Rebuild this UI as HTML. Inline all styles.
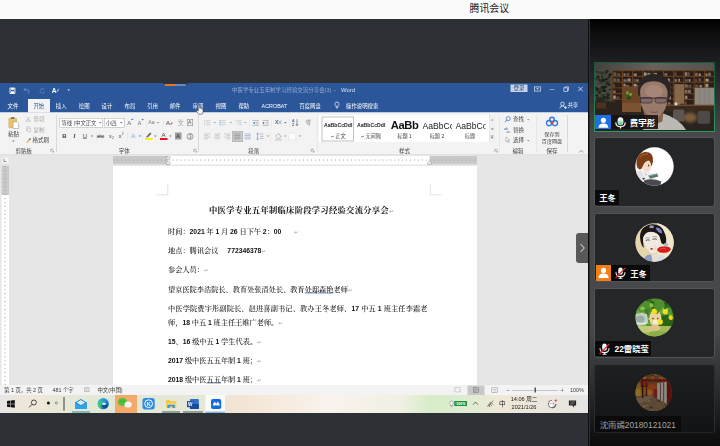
<!DOCTYPE html>
<html lang="zh-CN"><head><meta charset="utf-8"><title>腾讯会议</title>
<style>
html,body{margin:0;padding:0}
body{width:720px;height:446px;overflow:hidden;background:#2d3136;position:relative;font-family:"Liberation Sans","Noto Sans CJK SC",sans-serif;}
#top{position:absolute;left:0;top:0;width:720px;height:19px;background:#fbfbfb;}
#top span{position:absolute;left:469.5px;top:1.5px;font-size:10px;line-height:13px;color:#222;white-space:nowrap;letter-spacing:-0.1px}
#word{position:absolute;left:0;top:0;width:1440px;height:892px;transform:scale(0.5);transform-origin:0 0;pointer-events:none}
#word div,#word span,#word svg{position:absolute;box-sizing:border-box}
#word span{white-space:nowrap}
#word svg{overflow:visible}
#word u{text-decoration:underline;text-decoration-color:#7d94d0;text-decoration-thickness:1.6px;text-underline-offset:2.4px}
#panel{position:absolute;left:590.4px;top:19px;width:129.6px;height:427px;background:linear-gradient(180deg,#000 0%,#0e0e0f 3.5%,#1d1e20 10%,#47484b 27%,#47484b 73%,#2c2d2f 86%,#0b0b0c 100%);}
#panel div,#panel span,#panel svg{position:absolute;box-sizing:border-box}
#panel span{white-space:nowrap;color:#fff;font-weight:700}
.tile{left:3.9px;width:121px;height:69.3px;background:#252628;border:1.3px solid #525357;border-radius:3px;overflow:hidden}
.lbl{background:#0a0a0a;height:15.3px}
.lbl span{font-size:8.35px;line-height:15.3px;top:1.5px}

</style></head>
<body>
<div id="top"><span>腾讯会议</span></div>
<div id="word">
<div style="left:0px;top:166px;width:1176px;height:660px;background:#f3f3f3;"></div>
<div style="left:0px;top:166px;width:1176px;height:59px;background:#2b579a;"></div>
<div style="left:0px;top:225px;width:1176px;height:84px;background:#f3f3f3;"></div>
<div style="left:0px;top:309px;width:1176px;height:2px;background:#d4d4d4;"></div>
<div style="left:0px;top:311px;width:1176px;height:459px;background:#e6e6e6;"></div>
<div style="left:226px;top:331.2px;width:728px;height:438.8px;background:#ffffff;"></div>
<div style="left:0px;top:770px;width:1176px;height:20px;background:#f3f3f3;"></div>
<div style="left:0px;top:790px;width:1176px;height:36px;background:linear-gradient(90deg,#e9e9e6 0%,#f1efe2 30%,#f3f1dd 55%,#e4ecd6 80%,#dfe6da 100%);"></div>
<svg style="left:18.6px;top:174.6px;width:11.8px;height:13px;" viewBox="0 0 5.9 6.5"><path d="M0.5 0.5H5.4V6H0.5Z" fill="none" stroke="#fff" stroke-width=".9"/><rect x="1.6" y="0.6" width="2.7" height="1.8" fill="#fff"/><rect x="1.5" y="3.7" width="2.9" height="2.3" fill="#fff"/></svg>
<svg style="left:46px;top:175.2px;width:14px;height:12px;" viewBox="0 0 7 6"><path d="M1 2.2H4.2Q6.2 2.2 6.2 4.2Q6.2 5.6 4.6 5.6M2.8 0.4L1 2.2L2.8 4" fill="none" stroke="#7391c4" stroke-width=".9"/></svg>
<svg style="left:78px;top:174.8px;width:14px;height:14px;" viewBox="0 0 7 7"><path d="M5.6 3.5A2.3 2.3 0 1 1 4.2 1.4" fill="none" stroke="#5d7db6" stroke-width=".8"/><path d="M3.4 0.2L5 1.4L3.6 2.8" fill="none" stroke="#5d7db6" stroke-width=".7"/></svg>
<span style="top:171.56px;font-size:13.2px;line-height:18.48px;color:#fff;font-weight:700;left:103.6px;">A</span>
<svg style="left:111.2px;top:175.2px;width:8.8px;height:12px;" viewBox="0 0 4.4 6"><path d="M0.4 5.6Q1.6 1.6 4 0.4Q3.4 3.4 0.4 5.6" fill="#fff" stroke="#2b579a" stroke-width=".4"/></svg>
<svg style="left:135.2px;top:179.2px;width:4.8px;height:3.6px;" viewBox="0 0 2.4 1.8"><path d="M0 0H2.4L1.2 1.6Z" fill="#fff"/></svg>
<div style="left:326.8px;top:166px;width:48px;height:2.6px;background:#243454;"></div>
<div style="left:329.4px;top:168.4px;width:21px;height:4px;background:#e0782c;border-radius:2px 0 0 2px"></div>
<div style="left:350.4px;top:168.4px;width:22px;height:4px;background:#6e86b4;border-radius:0 2px 2px 0"></div>
<span style="top:172.77px;font-size:10.9px;line-height:15.26px;color:#94a7ca;left:464px;">中医学专业五年制学习经验交流分享会(3)</span>
<span style="top:172.42px;font-size:11.4px;line-height:15.96px;color:#a9b9d6;left:668px;">-</span>
<span style="top:172.14px;font-size:11.8px;line-height:16.52px;color:#d9e1f0;left:682px;">Word</span>
<div style="left:1021px;top:169.2px;width:34px;height:14.8px;background:#c7d3e8;"></div>
<span style="top:169.24px;font-size:10.8px;line-height:15.12px;color:#1e3f74;left:1038px;transform:translateX(-50%);">登录</span>
<svg style="left:1068px;top:173.2px;width:14px;height:10px;" viewBox="0 0 7 5"><rect x=".4" y=".4" width="6.2" height="4.2" fill="none" stroke="#dfe6f3" stroke-width=".7"/><path d="M3.5 1.4V3.8M2.4 2.6L3.5 1.4L4.6 2.6" stroke="#dfe6f3" stroke-width=".6" fill="none"/></svg>
<div style="left:1098.8px;top:178px;width:10px;height:1.2px;background:#dfe6f3;"></div>
<svg style="left:1127.2px;top:172.8px;width:10.8px;height:10.8px;" viewBox="0 0 5.4 5.4"><rect x=".4" y="1.4" width="3.6" height="3.6" fill="none" stroke="#dfe6f3" stroke-width=".7"/><path d="M1.4 1.4V.4H5V4H4" fill="none" stroke="#dfe6f3" stroke-width=".7"/></svg>
<svg style="left:1156px;top:172.8px;width:10px;height:10px;" viewBox="0 0 5 5"><path d="M.3 .3L4.7 4.7M4.7 .3L.3 4.7" stroke="#e8edf6" stroke-width=".8"/></svg>
<div style="left:56px;top:197.6px;width:44px;height:27.6px;background:#f3f3f3;"></div>
<span style="top:204.24px;font-size:10.8px;line-height:15.12px;color:#ffffff;left:26px;transform:translateX(-50%);">文件</span>
<span style="top:204.24px;font-size:10.8px;line-height:15.12px;color:#2b579a;left:77.6px;transform:translateX(-50%);">开始</span>
<span style="top:204.24px;font-size:10.8px;line-height:15.12px;color:#ffffff;left:122.4px;transform:translateX(-50%);">插入</span>
<span style="top:204.24px;font-size:10.8px;line-height:15.12px;color:#ffffff;left:168.4px;transform:translateX(-50%);">绘图</span>
<span style="top:204.24px;font-size:10.8px;line-height:15.12px;color:#ffffff;left:214px;transform:translateX(-50%);">设计</span>
<span style="top:204.24px;font-size:10.8px;line-height:15.12px;color:#ffffff;left:260px;transform:translateX(-50%);">布局</span>
<span style="top:204.24px;font-size:10.8px;line-height:15.12px;color:#ffffff;left:305.2px;transform:translateX(-50%);">引用</span>
<span style="top:204.24px;font-size:10.8px;line-height:15.12px;color:#ffffff;left:350px;transform:translateX(-50%);">邮件</span>
<span style="top:204.24px;font-size:10.8px;line-height:15.12px;color:#ffffff;left:396px;transform:translateX(-50%);">审阅</span>
<span style="top:204.24px;font-size:10.8px;line-height:15.12px;color:#ffffff;left:442px;transform:translateX(-50%);">视图</span>
<span style="top:204.24px;font-size:10.8px;line-height:15.12px;color:#ffffff;left:487.6px;transform:translateX(-50%);">帮助</span>
<span style="top:204.24px;font-size:10.8px;line-height:15.12px;color:#ffffff;left:548.8px;transform:translateX(-50%);">ACROBAT</span>
<span style="top:204.24px;font-size:10.8px;line-height:15.12px;color:#ffffff;left:620px;transform:translateX(-50%);">百度网盘</span>
<svg style="left:668.8px;top:203.2px;width:10px;height:16px;" viewBox="0 0 5 8"><path d="M2.5 .5A2 2 0 0 1 3.6 4.2V5.4H1.4V4.2A2 2 0 0 1 2.5 .5Z" fill="none" stroke="#fff" stroke-width=".7"/><path d="M1.5 6.4H3.5" stroke="#fff" stroke-width=".7"/></svg>
<span style="top:204.24px;font-size:10.8px;line-height:15.12px;color:#fff;left:692px;">操作说明搜索</span>
<svg style="left:1119.2px;top:202.8px;width:16px;height:16px;" viewBox="0 0 8 8"><circle cx="3" cy="2.4" r="1.8" fill="none" stroke="#fff" stroke-width=".7"/><path d="M.4 7Q.4 4.6 3 4.6Q4.6 4.6 5.2 5.4" fill="none" stroke="#fff" stroke-width=".7"/><path d="M6 4.6V7.6M4.5 6.1H7.5" stroke="#fff" stroke-width=".7"/></svg>
<span style="top:203.24px;font-size:10.8px;line-height:15.12px;color:#fff;left:1134.8px;">共享</span>
<div style="left:112.4px;top:230px;width:1.2px;height:74px;background:#dadada;"></div>
<div style="left:396.4px;top:230px;width:1.2px;height:74px;background:#dadada;"></div>
<div style="left:634px;top:230px;width:1.2px;height:74px;background:#dadada;"></div>
<div style="left:998.8px;top:230px;width:1.2px;height:74px;background:#dadada;"></div>
<div style="left:1072.8px;top:230px;width:1.2px;height:74px;background:#dadada;"></div>
<div style="left:1134.4px;top:230px;width:1.2px;height:74px;background:#dadada;"></div>
<div style="left:498.4px;top:236px;width:1px;height:18px;background:#dedede;"></div>
<div style="left:543.4px;top:236px;width:1px;height:18px;background:#dedede;"></div>
<div style="left:578.4px;top:236px;width:1px;height:18px;background:#dedede;"></div>
<div style="left:541px;top:264px;width:1px;height:18px;background:#dedede;"></div>
<div style="left:293.2px;top:236px;width:1px;height:18px;background:#dedede;"></div>
<div style="left:326.4px;top:236px;width:1px;height:18px;background:#dedede;"></div>
<div style="left:255.2px;top:264px;width:1px;height:18px;background:#dedede;"></div>
<div style="left:192px;top:264px;width:1px;height:18px;background:#dedede;"></div>
<div style="left:284.8px;top:264px;width:1px;height:18px;background:#dedede;"></div>
<svg style="left:17.2px;top:233.2px;width:21.2px;height:24.8px;" viewBox="0 0 10.6 12.4"><rect x=".4" y="1.6" width="7.6" height="9.6" rx=".6" fill="#e9c46a" stroke="#c79a3a" stroke-width=".5"/><rect x="2.6" y=".4" width="3.2" height="2.2" rx=".5" fill="#777"/><path d="M4.6 5.2H8.6L10.2 6.8V12H4.6Z" fill="#fff" stroke="#8a8a8a" stroke-width=".5"/></svg>
<span style="top:260.7px;font-size:11px;line-height:15.4px;color:#444444;left:26.8px;transform:translateX(-50%);">粘贴</span>
<svg style="left:24.4px;top:280.8px;width:5.2px;height:3.2px;" viewBox="0 0 2.6 1.6"><path d="M0 0H2.6L1.3 1.5Z" fill="#777"/></svg>
<svg style="left:51.2px;top:233.2px;width:10.8px;height:11.2px;" viewBox="0 0 5.4 5.6"><path d="M1 .4L4 4M4.4 .4L1.4 4" stroke="#b5b5b5" stroke-width=".6"/><circle cx="1.2" cy="4.6" r=".9" fill="none" stroke="#b5b5b5" stroke-width=".5"/><circle cx="4.2" cy="4.6" r=".9" fill="none" stroke="#b5b5b5" stroke-width=".5"/></svg>
<span style="top:231.1px;font-size:11px;line-height:15.4px;color:#a9a9a9;left:66.8px;">剪切</span>
<svg style="left:51.6px;top:253.2px;width:10.4px;height:11.6px;" viewBox="0 0 5.2 5.8"><rect x=".3" y=".3" width="3" height="3.8" fill="none" stroke="#b5b5b5" stroke-width=".5"/><rect x="1.8" y="1.6" width="3" height="3.8" fill="#f3f3f3" stroke="#b5b5b5" stroke-width=".5"/></svg>
<span style="top:251.5px;font-size:11px;line-height:15.4px;color:#a9a9a9;left:66.8px;">复制</span>
<svg style="left:51.2px;top:274.8px;width:11.2px;height:11.2px;" viewBox="0 0 5.6 5.6"><path d="M.6 4.8L2.8 2.6L3.8 3.6L1.6 5.6Z" fill="#e8b33a"/><path d="M3 2.2L4.6 .6L5.4 1.4L3.8 3Z" fill="#555"/></svg>
<span style="top:273.1px;font-size:11px;line-height:15.4px;color:#444444;left:65.2px;">格式刷</span>
<span style="top:293.5px;font-size:11px;line-height:15.4px;color:#444444;left:47.6px;transform:translateX(-50%);">剪贴板</span>
<svg style="left:101.2px;top:297.6px;width:6.8px;height:6.8px;" viewBox="0 0 3.4 3.4"><path d="M.3 3V.3H3" fill="none" stroke="#777" stroke-width=".5"/><path d="M1.4 1.4L3.1 3.1M3.1 1.8V3.1H1.8" fill="none" stroke="#777" stroke-width=".5"/></svg>
<div style="left:119.2px;top:236px;width:87.2px;height:18.8px;background:#fff;border:1px solid #ababab"></div>
<span style="top:237.78px;font-size:10.6px;line-height:14.84px;color:#444444;left:122.8px;">等线 (中文正文</span>
<svg style="left:198.4px;top:244.4px;width:5.2px;height:3.2px;" viewBox="0 0 2.6 1.6"><path d="M0 0H2.6L1.3 1.5Z" fill="#777"/></svg>
<div style="left:207.6px;top:236px;width:41.2px;height:18.8px;background:#fff;border:1px solid #ababab"></div>
<span style="top:237.78px;font-size:10.6px;line-height:14.84px;color:#444444;left:212px;">小四</span>
<svg style="left:240.4px;top:244.4px;width:5.2px;height:3.2px;" viewBox="0 0 2.6 1.6"><path d="M0 0H2.6L1.3 1.5Z" fill="#777"/></svg>
<span style="top:237.2px;font-size:12px;line-height:16.8px;color:#6a6a6a;left:258.4px;transform:translateX(-50%);">A</span>
<svg style="left:262.4px;top:237.2px;width:4.8px;height:3.2px;" viewBox="0 0 2.4 1.6"><path d="M0 1.5L1.2 0L2.4 1.5Z" fill="#2b6cc4"/></svg>
<span style="top:238.72px;font-size:10.4px;line-height:14.56px;color:#6a6a6a;left:279.2px;transform:translateX(-50%);">A</span>
<svg style="left:282.8px;top:238px;width:4.8px;height:3.2px;" viewBox="0 0 2.4 1.6"><path d="M0 0L1.2 1.5L2.4 0Z" fill="#2b6cc4"/></svg>
<span style="top:238.32px;font-size:10.4px;line-height:14.56px;color:#7a7a7a;left:302.8px;transform:translateX(-50%);">Aa</span>
<svg style="left:312.8px;top:244.4px;width:5.2px;height:3.2px;" viewBox="0 0 2.6 1.6"><path d="M0 0H2.6L1.3 1.5Z" fill="#999"/></svg>
<span style="top:237.2px;font-size:12px;line-height:16.8px;color:#444444;left:336px;transform:translateX(-50%);">A</span>
<svg style="left:338.8px;top:243.2px;width:8px;height:7.2px;" viewBox="0 0 4 3.6"><path d="M.4 2.4L2.2 .4L3.6 1.6L1.8 3.4Z" fill="#e7739a"/></svg>
<svg style="left:355.2px;top:237.2px;width:12.8px;height:16px;" viewBox="0 0 6.4 8"><text x="0" y="7" font-size="5.6" fill="#9a9a9a" font-family="Liberation Sans,sans-serif">文</text><path d="M.6 1.4H5.6" stroke="#aaa" stroke-width=".4"/></svg>
<div style="left:373.6px;top:238px;width:12px;height:14.4px;background:none;border:1px solid #777"></div>
<span style="top:237.92px;font-size:10.4px;line-height:14.56px;color:#555;left:379.6px;transform:translateX(-50%);">A</span>
<span style="top:264px;font-size:12px;line-height:16.8px;color:#444444;font-weight:700;left:128.8px;transform:translateX(-50%);">B</span>
<span style="top:264px;font-size:12px;line-height:16.8px;color:#444444;font-family:'Liberation Serif',serif;left:148.8px;transform:translateX(-50%);font-style:italic;font-weight:700">I</span>
<span style="top:263.88px;font-size:11.6px;line-height:16.24px;color:#444444;left:169.6px;transform:translateX(-50%);text-decoration:underline">U</span>
<svg style="left:181.2px;top:271.2px;width:5.2px;height:3.2px;" viewBox="0 0 2.6 1.6"><path d="M0 0H2.6L1.3 1.5Z" fill="#777"/></svg>
<span style="top:265.96px;font-size:9.2px;line-height:12.88px;color:#444444;left:201.2px;transform:translateX(-50%);text-decoration:line-through">abc</span>
<span style="top:265.24px;font-size:10.8px;line-height:15.12px;color:#444444;left:220.8px;transform:translateX(-50%);">x</span>
<span style="top:271.52px;font-size:6.4px;line-height:8.96px;color:#444444;left:225.6px;transform:translateX(-50%);">2</span>
<span style="top:265.24px;font-size:10.8px;line-height:15.12px;color:#444444;left:240.4px;transform:translateX(-50%);">x</span>
<span style="top:263.52px;font-size:6.4px;line-height:8.96px;color:#444444;left:245.2px;transform:translateX(-50%);">2</span>
<span style="top:263.32px;font-size:12.4px;line-height:17.36px;color:#a9c7ee;left:266.4px;transform:translateX(-50%);text-shadow:0 0 1.4px #7fb0ea">A</span>
<svg style="left:277.2px;top:271.2px;width:5.2px;height:3.2px;" viewBox="0 0 2.6 1.6"><path d="M0 0H2.6L1.3 1.5Z" fill="#777"/></svg>
<svg style="left:290.8px;top:264.4px;width:13.2px;height:10.8px;" viewBox="0 0 6.6 5.4"><path d="M1 4.6L4.6 .6L6 1.8L2.4 5.2Z" fill="#666"/><path d="M.4 5.2L1 4.6L2.4 5.2Z" fill="#333"/></svg>
<div style="left:290px;top:276px;width:15.2px;height:4px;background:#fff200;"></div>
<svg style="left:308px;top:271.2px;width:5.2px;height:3.2px;" viewBox="0 0 2.6 1.6"><path d="M0 0H2.6L1.3 1.5Z" fill="#777"/></svg>
<span style="top:262.4px;font-size:12px;line-height:16.8px;color:#444444;left:327.2px;transform:translateX(-50%);">A</span>
<div style="left:319.6px;top:276px;width:15.2px;height:4px;background:#e81123;"></div>
<svg style="left:338.4px;top:271.2px;width:5.2px;height:3.2px;" viewBox="0 0 2.6 1.6"><path d="M0 0H2.6L1.3 1.5Z" fill="#777"/></svg>
<div style="left:350px;top:265.2px;width:12.8px;height:14px;background:#9c9c9c;"></div>
<span style="top:264.56px;font-size:11.2px;line-height:15.68px;color:#333;left:356.4px;transform:translateX(-50%);">A</span>
<svg style="left:372.8px;top:265.6px;width:14px;height:14px;" viewBox="0 0 7 7"><circle cx="3.5" cy="3.5" r="3" fill="none" stroke="#666" stroke-width=".6"/><text x="1.7" y="5.2" font-size="4.4" fill="#555" font-family="Liberation Sans,sans-serif">字</text></svg>
<span style="top:293.5px;font-size:11px;line-height:15.4px;color:#444444;left:248.4px;transform:translateX(-50%);">字体</span>
<svg style="left:386.8px;top:297.6px;width:6.8px;height:6.8px;" viewBox="0 0 3.4 3.4"><path d="M.3 3V.3H3" fill="none" stroke="#777" stroke-width=".5"/><path d="M1.4 1.4L3.1 3.1M3.1 1.8V3.1H1.8" fill="none" stroke="#777" stroke-width=".5"/></svg>
<svg style="left:408px;top:239.6px;width:12.8px;height:12px;" viewBox="0 0 7 6.6"><circle cx=".7" cy="0.8" r=".6" fill="#b4b4b4"/><path d="M2.2 0.8H7" stroke="#b4b4b4" stroke-width=".6"/><circle cx=".7" cy="3.0" r=".6" fill="#b4b4b4"/><path d="M2.2 3.0H7" stroke="#b4b4b4" stroke-width=".6"/><circle cx=".7" cy="5.2" r=".6" fill="#b4b4b4"/><path d="M2.2 5.2H7" stroke="#b4b4b4" stroke-width=".6"/></svg>
<svg style="left:427.2px;top:244.4px;width:5.2px;height:3.2px;" viewBox="0 0 2.6 1.6"><path d="M0 0H2.6L1.3 1.5Z" fill="#aaa"/></svg>
<svg style="left:438.8px;top:239.6px;width:12.8px;height:12px;" viewBox="0 0 7 6.6"><rect x=".2" y="0.3" width=".9" height="1.1" fill="#2b6cc4"/><path d="M2.2 0.8H7" stroke="#b4b4b4" stroke-width=".6"/><rect x=".2" y="2.5" width=".9" height="1.1" fill="#2b6cc4"/><path d="M2.2 3.0H7" stroke="#b4b4b4" stroke-width=".6"/><rect x=".2" y="4.7" width=".9" height="1.1" fill="#2b6cc4"/><path d="M2.2 5.2H7" stroke="#b4b4b4" stroke-width=".6"/></svg>
<svg style="left:458.8px;top:244.4px;width:5.2px;height:3.2px;" viewBox="0 0 2.6 1.6"><path d="M0 0H2.6L1.3 1.5Z" fill="#aaa"/></svg>
<svg style="left:471.2px;top:239.6px;width:12.8px;height:12px;" viewBox="0 0 7 6.6"><rect x="0.2" y="0.3" width=".9" height="1" fill="#b4b4b4"/><path d="M2.2 0.8H7" stroke="#b4b4b4" stroke-width=".6"/><rect x="1.3" y="2.5" width=".9" height="1" fill="#b4b4b4"/><path d="M3.3000000000000003 3.0H7" stroke="#b4b4b4" stroke-width=".6"/><rect x="2.4000000000000004" y="4.7" width=".9" height="1" fill="#b4b4b4"/><path d="M4.4 5.2H7" stroke="#b4b4b4" stroke-width=".6"/></svg>
<svg style="left:488px;top:244.4px;width:5.2px;height:3.2px;" viewBox="0 0 2.6 1.6"><path d="M0 0H2.6L1.3 1.5Z" fill="#aaa"/></svg>
<svg style="left:505.2px;top:239.6px;width:12.8px;height:12px;" viewBox="0 0 7 6.6"><path d="M0 .5H7M3.4 2.4H7M3.4 4.2H7M0 6H7" stroke="#9a9a9a" stroke-width=".6"/><path d="M2.4 1.8V4.8L.4 3.3Z" fill="#2b6cc4"/></svg>
<svg style="left:525.2px;top:239.6px;width:12.8px;height:12px;" viewBox="0 0 7 6.6"><path d="M0 .5H7M3.4 2.4H7M3.4 4.2H7M0 6H7" stroke="#9a9a9a" stroke-width=".6"/><path d="M.4 1.8V4.8L2.4 3.3Z" fill="#2b6cc4"/></svg>
<svg style="left:548.8px;top:238px;width:16px;height:15.2px;" viewBox="0 0 8 7.6"><text x="0.6" y="5.4" font-size="5" fill="#666" font-family="Liberation Sans,sans-serif" font-weight="700">X</text><path d="M3.8 1.4L7 5.2M7 1.4L3.8 5.2" stroke="#4a86d4" stroke-width=".6"/></svg>
<svg style="left:568px;top:244.4px;width:5.2px;height:3.2px;" viewBox="0 0 2.6 1.6"><path d="M0 0H2.6L1.3 1.5Z" fill="#777"/></svg>
<svg style="left:583.6px;top:237.2px;width:14px;height:16px;" viewBox="0 0 7 8"><text x="0" y="3.6" font-size="3.6" fill="#2b6cc4" font-family="Liberation Sans,sans-serif" font-weight="700">A</text><text x="0" y="7.6" font-size="3.6" fill="#555" font-family="Liberation Sans,sans-serif" font-weight="700">Z</text><path d="M5 .6V7M3.8 5.6L5 7.2L6.2 5.6" fill="none" stroke="#555" stroke-width=".6"/></svg>
<svg style="left:611.2px;top:238.8px;width:12px;height:13.2px;" viewBox="0 0 6 6.6"><path d="M2.6 .6V6M4.2 .6V6M5.4 .6H2.2A1.6 1.6 0 0 0 2.2 3.8H2.6" fill="none" stroke="#888" stroke-width=".6"/></svg>
<svg style="left:408px;top:267.2px;width:12.8px;height:12px;" viewBox="0 0 7 6.6"><path d="M0 0.5H7" stroke="#b8b8b8" stroke-width=".7"/><path d="M0 2.3H4.6" stroke="#b8b8b8" stroke-width=".7"/><path d="M0 4.1H7" stroke="#b8b8b8" stroke-width=".7"/><path d="M0 5.9H4" stroke="#b8b8b8" stroke-width=".7"/></svg>
<svg style="left:428px;top:267.2px;width:12.8px;height:12px;" viewBox="0 0 7 6.6"><path d="M0.0 0.5H7.0" stroke="#b8b8b8" stroke-width=".7"/><path d="M1.2999999999999998 2.3H5.7" stroke="#b8b8b8" stroke-width=".7"/><path d="M0.0 4.1H7.0" stroke="#b8b8b8" stroke-width=".7"/><path d="M1.2999999999999998 5.9H5.7" stroke="#b8b8b8" stroke-width=".7"/></svg>
<svg style="left:447.6px;top:267.2px;width:12.8px;height:12px;" viewBox="0 0 7 6.6"><path d="M0 0.5H7" stroke="#b8b8b8" stroke-width=".7"/><path d="M2.4000000000000004 2.3H7.0" stroke="#b8b8b8" stroke-width=".7"/><path d="M0 4.1H7" stroke="#b8b8b8" stroke-width=".7"/><path d="M3 5.9H7" stroke="#b8b8b8" stroke-width=".7"/></svg>
<div style="left:464px;top:261.6px;width:21.6px;height:22.4px;background:#c9c9c9;border:1px solid #ababab"></div>
<svg style="left:468.4px;top:267.2px;width:12.8px;height:12px;" viewBox="0 0 7 6.6"><path d="M0 0.5H7" stroke="#8e8e8e" stroke-width=".7"/><path d="M0 2.3H7" stroke="#8e8e8e" stroke-width=".7"/><path d="M0 4.1H7" stroke="#8e8e8e" stroke-width=".7"/><path d="M0 5.9H7" stroke="#8e8e8e" stroke-width=".7"/></svg>
<svg style="left:489.2px;top:267.2px;width:12.8px;height:12px;" viewBox="0 0 7 6.6"><path d="M0 0.5H7" stroke="#93a5c0" stroke-width=".7"/><path d="M0 2.3H7" stroke="#93a5c0" stroke-width=".7"/><path d="M0 4.1H7" stroke="#93a5c0" stroke-width=".7"/><path d="M0 5.9H7" stroke="#93a5c0" stroke-width=".7"/></svg>
<svg style="left:512px;top:265.2px;width:16px;height:16px;" viewBox="0 0 8 8"><path d="M1.6 .6V7.2M.4 1.8L1.6 .4L2.8 1.8M.4 6L1.6 7.4L2.8 6" fill="none" stroke="#4a86d4" stroke-width=".6"/><path d="M4 1.6H7.4M4 3.8H7.4M4 6H7.4" stroke="#999" stroke-width=".6"/></svg>
<svg style="left:532.8px;top:271.2px;width:5.2px;height:3.2px;" viewBox="0 0 2.6 1.6"><path d="M0 0H2.6L1.3 1.5Z" fill="#999"/></svg>
<svg style="left:548.8px;top:264.8px;width:16px;height:16px;" viewBox="0 0 8 8"><path d="M4 .6L6.6 4.4L3.6 6.4L1.2 3.8Z" fill="none" stroke="#999" stroke-width=".6"/><path d="M.4 7.4H7.6" stroke="#ccc" stroke-width="1.2"/></svg>
<svg style="left:568.4px;top:271.2px;width:5.2px;height:3.2px;" viewBox="0 0 2.6 1.6"><path d="M0 0H2.6L1.3 1.5Z" fill="#999"/></svg>
<div style="left:577.2px;top:265.6px;width:14.8px;height:14px;background:#fdfdfd;border:1px dotted #bdbdbd"></div>
<svg style="left:597.2px;top:271.2px;width:5.2px;height:3.2px;" viewBox="0 0 2.6 1.6"><path d="M0 0H2.6L1.3 1.5Z" fill="#999"/></svg>
<span style="top:293.5px;font-size:11px;line-height:15.4px;color:#444444;left:507.6px;transform:translateX(-50%);">段落</span>
<svg style="left:622px;top:297.6px;width:6.8px;height:6.8px;" viewBox="0 0 3.4 3.4"><path d="M.3 3V.3H3" fill="none" stroke="#777" stroke-width=".5"/><path d="M1.4 1.4L3.1 3.1M3.1 1.8V3.1H1.8" fill="none" stroke="#777" stroke-width=".5"/></svg>
<div style="left:636.8px;top:230px;width:353.2px;height:54.4px;background:#fff;"></div>
<div style="left:977.6px;top:230.4px;width:12.8px;height:54px;background:#f0f0f0;border-left:1px solid #dcdcdc"></div>
<div style="left:643.2px;top:233.2px;width:64.8px;height:49.6px;background:#fff;border:2.4px solid #c2c2c2"></div>
<span style="top:243.99px;font-size:10.3px;line-height:14.42px;color:#222;font-weight:700;left:676.4px;transform:translateX(-50%);">AaBbCcDdI</span>
<span style="top:265.32px;font-size:10.4px;line-height:14.56px;color:#444444;left:676.4px;transform:translateX(-50%);"><i style="font-style:normal;font-size:7.2px">↵</i> 正文</span>
<span style="top:243.99px;font-size:10.3px;line-height:14.42px;color:#222;font-weight:700;left:742.4px;transform:translateX(-50%);">AaBbCcDdI</span>
<span style="top:265.32px;font-size:10.4px;line-height:14.56px;color:#444444;left:742px;transform:translateX(-50%);"><i style="font-style:normal;font-size:7.2px">↵</i> 无间隔</span>
<span style="top:234.32px;font-size:22.4px;line-height:31.36px;color:#111;font-weight:700;left:809.2px;transform:translateX(-50%);letter-spacing:-0.7px">AaBb</span>
<span style="top:265.12px;font-size:10.4px;line-height:14.56px;color:#444444;left:809.2px;transform:translateX(-50%);">标题 1</span>
<div style="left:844.8px;top:238px;width:59.6px;height:26px;background:none;overflow:hidden"><span style="left:0;top:0;font-size:17.2px;line-height:26px;color:#1a1a1a">AaBbCc</span></div>
<span style="top:265.12px;font-size:10.4px;line-height:14.56px;color:#444444;left:874px;transform:translateX(-50%);">标题 2</span>
<div style="left:911.2px;top:238px;width:59.6px;height:26px;background:none;overflow:hidden"><span style="left:0;top:0;font-size:17.2px;line-height:26px;color:#1a1a1a">AaBbCc</span></div>
<span style="top:265.12px;font-size:10.4px;line-height:14.56px;color:#444444;left:940px;transform:translateX(-50%);">标题</span>
<svg style="left:981.6px;top:238px;width:5.2px;height:3.2px;" viewBox="0 0 2.6 1.6"><path d="M0 1.5L1.3 0L2.6 1.5Z" fill="#999"/></svg>
<svg style="left:981.6px;top:256.8px;width:5.2px;height:3.2px;" viewBox="0 0 2.6 1.6"><path d="M0 0H2.6L1.3 1.5Z" fill="#666"/></svg>
<svg style="left:981.2px;top:272px;width:6px;height:6px;" viewBox="0 0 3 3"><path d="M0 0H3" stroke="#666" stroke-width=".6"/><path d="M.2 1.2H2.8L1.5 2.8Z" fill="#666"/></svg>
<span style="top:293.5px;font-size:11px;line-height:15.4px;color:#444444;left:809.2px;transform:translateX(-50%);">样式</span>
<svg style="left:988.8px;top:297.6px;width:6.8px;height:6.8px;" viewBox="0 0 3.4 3.4"><path d="M.3 3V.3H3" fill="none" stroke="#777" stroke-width=".5"/><path d="M1.4 1.4L3.1 3.1M3.1 1.8V3.1H1.8" fill="none" stroke="#777" stroke-width=".5"/></svg>
<svg style="left:1008.8px;top:231.6px;width:13.2px;height:13.2px;" viewBox="0 0 6.6 6.6"><circle cx="3.8" cy="2.6" r="2" fill="none" stroke="#2b6cc4" stroke-width=".7"/><path d="M2.4 4L.4 6.2" stroke="#2b6cc4" stroke-width=".8"/></svg>
<span style="top:230.7px;font-size:11px;line-height:15.4px;color:#444444;left:1026px;">查找</span>
<svg style="left:1054px;top:237.6px;width:5.2px;height:3.2px;" viewBox="0 0 2.6 1.6"><path d="M0 0H2.6L1.3 1.5Z" fill="#999"/></svg>
<svg style="left:1008.4px;top:252.8px;width:14px;height:13.2px;" viewBox="0 0 7 6.6"><text x="0" y="3.6" font-size="3.6" fill="#2b6cc4" font-family="Liberation Sans,sans-serif">ab</text><text x="2.4" y="6.6" font-size="3.6" fill="#666" font-family="Liberation Sans,sans-serif">ac</text></svg>
<span style="top:251.5px;font-size:11px;line-height:15.4px;color:#444444;left:1026px;">替换</span>
<svg style="left:1010.8px;top:272.8px;width:9.2px;height:13.2px;" viewBox="0 0 4.6 6.6"><path d="M.5 .4V5.2L1.8 4L2.8 6.2L3.6 5.8L2.6 3.8H4.2Z" fill="#fff" stroke="#888" stroke-width=".5"/></svg>
<span style="top:272.7px;font-size:11px;line-height:15.4px;color:#444444;left:1026px;">选择</span>
<svg style="left:1054px;top:279.6px;width:5.2px;height:3.2px;" viewBox="0 0 2.6 1.6"><path d="M0 0H2.6L1.3 1.5Z" fill="#999"/></svg>
<span style="top:293.9px;font-size:11px;line-height:15.4px;color:#444444;left:1036px;transform:translateX(-50%);">编辑</span>
<svg style="left:1091.2px;top:232.8px;width:26px;height:21.2px;" viewBox="0 0 13 10.6"><circle cx="3.6" cy="6.6" r="2.6" fill="none" stroke="#2f7de1" stroke-width="1.4"/><circle cx="9.4" cy="6.6" r="2.6" fill="none" stroke="#2f7de1" stroke-width="1.4"/><circle cx="6.5" cy="3.2" r="2.4" fill="none" stroke="#2f7de1" stroke-width="1.4"/><circle cx="6.5" cy="6.2" r="1.5" fill="#e8413a"/></svg>
<span style="top:261.86px;font-size:10.2px;line-height:14.28px;color:#444444;left:1104px;transform:translateX(-50%);">保存到</span>
<span style="top:275.66px;font-size:10.2px;line-height:14.28px;color:#444444;left:1104px;transform:translateX(-50%);">百度网盘</span>
<span style="top:293.9px;font-size:11px;line-height:15.4px;color:#444444;left:1104px;transform:translateX(-50%);">保存</span>
<svg style="left:1158px;top:300.4px;width:9.2px;height:5.6px;" viewBox="0 0 4.6 2.8"><path d="M.4 2.4L2.3 .5L4.2 2.4" fill="none" stroke="#555" stroke-width=".6"/></svg>
<div style="left:0px;top:311px;width:1176px;height:21px;background:#e6e6e6;"></div>
<div style="left:2.8px;top:314px;width:15.2px;height:14px;background:#f6f6f6;border:1px solid #e0e0e0"></div>
<svg style="left:6.8px;top:317.2px;width:6.8px;height:7.2px;" viewBox="0 0 3.4 3.6"><path d="M.4 .2V3H3" fill="none" stroke="#666" stroke-width=".7"/></svg>
<div style="left:226px;top:312.4px;width:728px;height:16.4px;background:#ffffff;"></div>
<div style="left:226px;top:312.4px;width:110px;height:16.4px;background:#c9c9c9;"></div>
<div style="left:859.2px;top:312.4px;width:94.8px;height:16.4px;background:#c9c9c9;"></div>
<svg style="left:226px;top:313.4px;width:728px;height:14.4px;" viewBox="0 0 364 7.2"><rect x="0.40" y="2.6" width=".5" height="2" fill="#9a9a9a"/><rect x="4.36" y="3.2" width=".7" height=".9" fill="#7b7b7b"/><rect x="8.32" y="2.6" width=".5" height="2" fill="#9a9a9a"/><rect x="12.28" y="3.2" width=".7" height=".9" fill="#7b7b7b"/><rect x="16.24" y="2.6" width=".5" height="2" fill="#9a9a9a"/><rect x="20.20" y="3.2" width=".7" height=".9" fill="#7b7b7b"/><rect x="24.16" y="2.6" width=".5" height="2" fill="#9a9a9a"/><rect x="28.12" y="3.2" width=".7" height=".9" fill="#7b7b7b"/><rect x="32.08" y="2.6" width=".5" height="2" fill="#9a9a9a"/><rect x="36.04" y="3.2" width=".7" height=".9" fill="#7b7b7b"/><rect x="40.00" y="2.6" width=".5" height="2" fill="#9a9a9a"/><rect x="43.96" y="3.2" width=".7" height=".9" fill="#7b7b7b"/><rect x="47.92" y="2.6" width=".5" height="2" fill="#9a9a9a"/><rect x="51.88" y="3.2" width=".7" height=".9" fill="#7b7b7b"/><rect x="55.84" y="2.6" width=".5" height="2" fill="#9a9a9a"/><rect x="59.80" y="3.2" width=".7" height=".9" fill="#7b7b7b"/><rect x="63.76" y="2.6" width=".5" height="2" fill="#9a9a9a"/><rect x="67.72" y="3.2" width=".7" height=".9" fill="#7b7b7b"/><rect x="71.68" y="2.6" width=".5" height="2" fill="#9a9a9a"/><rect x="75.64" y="3.2" width=".7" height=".9" fill="#7b7b7b"/><rect x="79.60" y="2.6" width=".5" height="2" fill="#9a9a9a"/><rect x="83.56" y="3.2" width=".7" height=".9" fill="#7b7b7b"/><rect x="87.52" y="2.6" width=".5" height="2" fill="#9a9a9a"/><rect x="91.48" y="3.2" width=".7" height=".9" fill="#7b7b7b"/><rect x="95.44" y="2.6" width=".5" height="2" fill="#9a9a9a"/><rect x="99.40" y="3.2" width=".7" height=".9" fill="#7b7b7b"/><rect x="103.36" y="2.6" width=".5" height="2" fill="#9a9a9a"/><rect x="107.32" y="3.2" width=".7" height=".9" fill="#7b7b7b"/><rect x="111.28" y="2.6" width=".5" height="2" fill="#9a9a9a"/><rect x="115.24" y="3.2" width=".7" height=".9" fill="#7b7b7b"/><rect x="119.20" y="2.6" width=".5" height="2" fill="#9a9a9a"/><rect x="123.16" y="3.2" width=".7" height=".9" fill="#7b7b7b"/><rect x="127.12" y="2.6" width=".5" height="2" fill="#9a9a9a"/><rect x="131.08" y="3.2" width=".7" height=".9" fill="#7b7b7b"/><rect x="135.04" y="2.6" width=".5" height="2" fill="#9a9a9a"/><rect x="139.00" y="3.2" width=".7" height=".9" fill="#7b7b7b"/><rect x="142.96" y="2.6" width=".5" height="2" fill="#9a9a9a"/><rect x="146.92" y="3.2" width=".7" height=".9" fill="#7b7b7b"/><rect x="150.88" y="2.6" width=".5" height="2" fill="#9a9a9a"/><rect x="154.84" y="3.2" width=".7" height=".9" fill="#7b7b7b"/><rect x="158.80" y="2.6" width=".5" height="2" fill="#9a9a9a"/><rect x="162.76" y="3.2" width=".7" height=".9" fill="#7b7b7b"/><rect x="166.72" y="2.6" width=".5" height="2" fill="#9a9a9a"/><rect x="170.68" y="3.2" width=".7" height=".9" fill="#7b7b7b"/><rect x="174.64" y="2.6" width=".5" height="2" fill="#9a9a9a"/><rect x="178.60" y="3.2" width=".7" height=".9" fill="#7b7b7b"/><rect x="182.56" y="2.6" width=".5" height="2" fill="#9a9a9a"/><rect x="186.52" y="3.2" width=".7" height=".9" fill="#7b7b7b"/><rect x="190.48" y="2.6" width=".5" height="2" fill="#9a9a9a"/><rect x="194.44" y="3.2" width=".7" height=".9" fill="#7b7b7b"/><rect x="198.40" y="2.6" width=".5" height="2" fill="#9a9a9a"/><rect x="202.36" y="3.2" width=".7" height=".9" fill="#7b7b7b"/><rect x="206.32" y="2.6" width=".5" height="2" fill="#9a9a9a"/><rect x="210.28" y="3.2" width=".7" height=".9" fill="#7b7b7b"/><rect x="214.24" y="2.6" width=".5" height="2" fill="#9a9a9a"/><rect x="218.20" y="3.2" width=".7" height=".9" fill="#7b7b7b"/><rect x="222.16" y="2.6" width=".5" height="2" fill="#9a9a9a"/><rect x="226.12" y="3.2" width=".7" height=".9" fill="#7b7b7b"/><rect x="230.08" y="2.6" width=".5" height="2" fill="#9a9a9a"/><rect x="234.04" y="3.2" width=".7" height=".9" fill="#7b7b7b"/><rect x="238.00" y="2.6" width=".5" height="2" fill="#9a9a9a"/><rect x="241.96" y="3.2" width=".7" height=".9" fill="#7b7b7b"/><rect x="245.92" y="2.6" width=".5" height="2" fill="#9a9a9a"/><rect x="249.88" y="3.2" width=".7" height=".9" fill="#7b7b7b"/><rect x="253.84" y="2.6" width=".5" height="2" fill="#9a9a9a"/><rect x="257.80" y="3.2" width=".7" height=".9" fill="#7b7b7b"/><rect x="261.76" y="2.6" width=".5" height="2" fill="#9a9a9a"/><rect x="265.72" y="3.2" width=".7" height=".9" fill="#7b7b7b"/><rect x="269.68" y="2.6" width=".5" height="2" fill="#9a9a9a"/><rect x="273.64" y="3.2" width=".7" height=".9" fill="#7b7b7b"/><rect x="277.60" y="2.6" width=".5" height="2" fill="#9a9a9a"/><rect x="281.56" y="3.2" width=".7" height=".9" fill="#7b7b7b"/><rect x="285.52" y="2.6" width=".5" height="2" fill="#9a9a9a"/><rect x="289.48" y="3.2" width=".7" height=".9" fill="#7b7b7b"/><rect x="293.44" y="2.6" width=".5" height="2" fill="#9a9a9a"/><rect x="297.40" y="3.2" width=".7" height=".9" fill="#7b7b7b"/><rect x="301.36" y="2.6" width=".5" height="2" fill="#9a9a9a"/><rect x="305.32" y="3.2" width=".7" height=".9" fill="#7b7b7b"/><rect x="309.28" y="2.6" width=".5" height="2" fill="#9a9a9a"/><rect x="313.24" y="3.2" width=".7" height=".9" fill="#7b7b7b"/><rect x="317.20" y="2.6" width=".5" height="2" fill="#9a9a9a"/><rect x="321.16" y="3.2" width=".7" height=".9" fill="#7b7b7b"/><rect x="325.12" y="2.6" width=".5" height="2" fill="#9a9a9a"/><rect x="329.08" y="3.2" width=".7" height=".9" fill="#7b7b7b"/><rect x="333.04" y="2.6" width=".5" height="2" fill="#9a9a9a"/><rect x="337.00" y="3.2" width=".7" height=".9" fill="#7b7b7b"/><rect x="340.96" y="2.6" width=".5" height="2" fill="#9a9a9a"/><rect x="344.92" y="3.2" width=".7" height=".9" fill="#7b7b7b"/><rect x="348.88" y="2.6" width=".5" height="2" fill="#9a9a9a"/><rect x="352.84" y="3.2" width=".7" height=".9" fill="#7b7b7b"/><rect x="356.80" y="2.6" width=".5" height="2" fill="#9a9a9a"/><rect x="360.76" y="3.2" width=".7" height=".9" fill="#7b7b7b"/></svg>
<svg style="left:331.2px;top:313.2px;width:10px;height:16.8px;" viewBox="0 0 5 8.4"><path d="M.6 .4H4.4V1.8L2.5 3.4L.6 1.8Z" fill="#f4f4f4" stroke="#8a8a8a" stroke-width=".5"/><path d="M.6 8V6.4L2.5 4.8L4.4 6.4V8Z" fill="#f4f4f4" stroke="#8a8a8a" stroke-width=".5"/></svg>
<svg style="left:854.4px;top:320.8px;width:10px;height:8.4px;" viewBox="0 0 5 4.2"><path d="M.6 3.8V2.2L2.5 .6L4.4 2.2V3.8Z" fill="#f4f4f4" stroke="#8a8a8a" stroke-width=".5"/></svg>
<div style="left:3.2px;top:331.2px;width:14.4px;height:438.8px;background:#ffffff;"></div>
<div style="left:3.2px;top:331.2px;width:14.4px;height:58.8px;background:#c9c9c9;"></div>
<svg style="left:3.2px;top:331.2px;width:14px;height:438.8px;" viewBox="0 0 7 219.4"><rect x="2.5" y="1.00" width="2" height=".5" fill="#9a9a9a"/><rect x="3.1" y="4.96" width=".9" height=".7" fill="#7b7b7b"/><rect x="2.5" y="8.92" width="2" height=".5" fill="#9a9a9a"/><rect x="3.1" y="12.88" width=".9" height=".7" fill="#7b7b7b"/><rect x="2.5" y="16.84" width="2" height=".5" fill="#9a9a9a"/><rect x="3.1" y="20.80" width=".9" height=".7" fill="#7b7b7b"/><rect x="2.5" y="24.76" width="2" height=".5" fill="#9a9a9a"/><rect x="3.1" y="28.72" width=".9" height=".7" fill="#7b7b7b"/><rect x="2.5" y="32.68" width="2" height=".5" fill="#9a9a9a"/><rect x="3.1" y="36.64" width=".9" height=".7" fill="#7b7b7b"/><rect x="2.5" y="40.60" width="2" height=".5" fill="#9a9a9a"/><rect x="3.1" y="44.56" width=".9" height=".7" fill="#7b7b7b"/><rect x="2.5" y="48.52" width="2" height=".5" fill="#9a9a9a"/><rect x="3.1" y="52.48" width=".9" height=".7" fill="#7b7b7b"/><rect x="2.5" y="56.44" width="2" height=".5" fill="#9a9a9a"/><rect x="3.1" y="60.40" width=".9" height=".7" fill="#7b7b7b"/><rect x="2.5" y="64.36" width="2" height=".5" fill="#9a9a9a"/><rect x="3.1" y="68.32" width=".9" height=".7" fill="#7b7b7b"/><rect x="2.5" y="72.28" width="2" height=".5" fill="#9a9a9a"/><rect x="3.1" y="76.24" width=".9" height=".7" fill="#7b7b7b"/><rect x="2.5" y="80.20" width="2" height=".5" fill="#9a9a9a"/><rect x="3.1" y="84.16" width=".9" height=".7" fill="#7b7b7b"/><rect x="2.5" y="88.12" width="2" height=".5" fill="#9a9a9a"/><rect x="3.1" y="92.08" width=".9" height=".7" fill="#7b7b7b"/><rect x="2.5" y="96.04" width="2" height=".5" fill="#9a9a9a"/><rect x="3.1" y="100.00" width=".9" height=".7" fill="#7b7b7b"/><rect x="2.5" y="103.96" width="2" height=".5" fill="#9a9a9a"/><rect x="3.1" y="107.92" width=".9" height=".7" fill="#7b7b7b"/><rect x="2.5" y="111.88" width="2" height=".5" fill="#9a9a9a"/><rect x="3.1" y="115.84" width=".9" height=".7" fill="#7b7b7b"/><rect x="2.5" y="119.80" width="2" height=".5" fill="#9a9a9a"/><rect x="3.1" y="123.76" width=".9" height=".7" fill="#7b7b7b"/><rect x="2.5" y="127.72" width="2" height=".5" fill="#9a9a9a"/><rect x="3.1" y="131.68" width=".9" height=".7" fill="#7b7b7b"/><rect x="2.5" y="135.64" width="2" height=".5" fill="#9a9a9a"/><rect x="3.1" y="139.60" width=".9" height=".7" fill="#7b7b7b"/><rect x="2.5" y="143.56" width="2" height=".5" fill="#9a9a9a"/><rect x="3.1" y="147.52" width=".9" height=".7" fill="#7b7b7b"/><rect x="2.5" y="151.48" width="2" height=".5" fill="#9a9a9a"/><rect x="3.1" y="155.44" width=".9" height=".7" fill="#7b7b7b"/><rect x="2.5" y="159.40" width="2" height=".5" fill="#9a9a9a"/><rect x="3.1" y="163.36" width=".9" height=".7" fill="#7b7b7b"/><rect x="2.5" y="167.32" width="2" height=".5" fill="#9a9a9a"/><rect x="3.1" y="171.28" width=".9" height=".7" fill="#7b7b7b"/><rect x="2.5" y="175.24" width="2" height=".5" fill="#9a9a9a"/><rect x="3.1" y="179.20" width=".9" height=".7" fill="#7b7b7b"/><rect x="2.5" y="183.16" width="2" height=".5" fill="#9a9a9a"/><rect x="3.1" y="187.12" width=".9" height=".7" fill="#7b7b7b"/><rect x="2.5" y="191.08" width="2" height=".5" fill="#9a9a9a"/><rect x="3.1" y="195.04" width=".9" height=".7" fill="#7b7b7b"/><rect x="2.5" y="199.00" width="2" height=".5" fill="#9a9a9a"/><rect x="3.1" y="202.96" width=".9" height=".7" fill="#7b7b7b"/><rect x="2.5" y="206.92" width="2" height=".5" fill="#9a9a9a"/><rect x="3.1" y="210.88" width=".9" height=".7" fill="#7b7b7b"/><rect x="2.5" y="214.84" width="2" height=".5" fill="#9a9a9a"/><rect x="3.1" y="218.80" width=".9" height=".7" fill="#7b7b7b"/></svg>
<svg style="left:312.8px;top:367.2px;width:23.2px;height:23.2px;" viewBox="0 0 11.6 11.6"><path d="M11.3 0V11.3H0" fill="none" stroke="#cfcfcf" stroke-width=".6"/></svg>
<svg style="left:860px;top:367.2px;width:23.2px;height:23.2px;" viewBox="0 0 11.6 11.6"><path d="M.3 0V11.3H11.6" fill="none" stroke="#cfcfcf" stroke-width=".6"/></svg>
<span style="top:409.18px;font-size:16.6px;line-height:23.24px;color:#111;font-weight:700;font-family:'Liberation Serif','Noto Serif CJK SC',serif;left:418px;letter-spacing:0.54px">中医学专业五年制临床阶段学习经验交流分享会<i style="font-style:normal;color:#9a9a9a;font-family:'DejaVu Sans',sans-serif;font-size:10px">↵</i></span>
<span style="top:453.12px;font-size:14.4px;line-height:20.16px;color:#111;font-weight:500;font-family:'Liberation Serif','Noto Serif CJK SC',serif;left:336px;">时间：<b style="font-family:'Liberation Sans',sans-serif;font-weight:700;font-size:13.6px">2021</b> 年 <b style="font-family:'Liberation Sans',sans-serif;font-weight:700;font-size:13.6px">1</b> 月 <b style="font-family:'Liberation Sans',sans-serif;font-weight:700;font-size:13.6px">26</b> 日下午 <b style="font-family:'Liberation Sans',sans-serif;font-weight:700;font-size:13.6px">2</b>：<b style="font-family:'Liberation Sans',sans-serif;font-weight:700;font-size:13.6px">00</b>&nbsp;&nbsp;&nbsp;&nbsp;&nbsp;&nbsp;&nbsp;<i style="font-style:normal;color:#9a9a9a;font-family:'DejaVu Sans',sans-serif;font-size:10px">↵</i></span>
<span style="top:491.12px;font-size:14.4px;line-height:20.16px;color:#111;font-weight:500;font-family:'Liberation Serif','Noto Serif CJK SC',serif;left:336px;">地点：腾讯会议&nbsp;&nbsp;&nbsp;&nbsp;&nbsp;<b style="font-family:'Liberation Sans',sans-serif;font-weight:700;font-size:13.6px">772346378</b><i style="font-style:normal;color:#9a9a9a;font-family:'DejaVu Sans',sans-serif;font-size:10px">↵</i></span>
<span style="top:527.72px;font-size:14.4px;line-height:20.16px;color:#111;font-weight:500;font-family:'Liberation Serif','Noto Serif CJK SC',serif;left:336px;">参会人员：<i style="font-style:normal;color:#9a9a9a;font-family:'DejaVu Sans',sans-serif;font-size:10px">↵</i></span>
<span style="top:567.72px;font-size:14.4px;line-height:20.16px;color:#111;font-weight:500;font-family:'Liberation Serif','Noto Serif CJK SC',serif;left:336px;">望京医院李浩院长、教育处张清处长、教育<u>处邸森艳</u>老师<i style="font-style:normal;color:#9a9a9a;font-family:'DejaVu Sans',sans-serif;font-size:10px">↵</i></span>
<span style="top:605.72px;font-size:14.4px;line-height:20.16px;color:#111;font-weight:500;font-family:'Liberation Serif','Noto Serif CJK SC',serif;left:336px;letter-spacing:0.28px">中医学院费宇彤副院长、赵进喜副书记、教办王冬老师、<b style="font-family:'Liberation Sans',sans-serif;font-weight:700;font-size:13.6px">17</b> 中五 <b style="font-family:'Liberation Sans',sans-serif;font-weight:700;font-size:13.6px">1</b> 班主任李霜老</span>
<span style="top:634.32px;font-size:14.4px;line-height:20.16px;color:#111;font-weight:500;font-family:'Liberation Serif','Noto Serif CJK SC',serif;left:336px;">师，<b style="font-family:'Liberation Sans',sans-serif;font-weight:700;font-size:13.6px">18</b> 中五 <b style="font-family:'Liberation Sans',sans-serif;font-weight:700;font-size:13.6px">1</b> 班主任王维广老师。<i style="font-style:normal;color:#9a9a9a;font-family:'DejaVu Sans',sans-serif;font-size:10px">↵</i></span>
<span style="top:672.92px;font-size:14.4px;line-height:20.16px;color:#111;font-weight:500;font-family:'Liberation Serif','Noto Serif CJK SC',serif;left:336px;"><b style="font-family:'Liberation Sans',sans-serif;font-weight:700;font-size:13.6px">15</b>、<b style="font-family:'Liberation Sans',sans-serif;font-weight:700;font-size:13.6px">16</b> 级中五 <b style="font-family:'Liberation Sans',sans-serif;font-weight:700;font-size:13.6px">1</b> 学生代表。<i style="font-style:normal;color:#9a9a9a;font-family:'DejaVu Sans',sans-serif;font-size:10px">↵</i></span>
<span style="top:710.32px;font-size:14.4px;line-height:20.16px;color:#111;font-weight:500;font-family:'Liberation Serif','Noto Serif CJK SC',serif;left:336px;"><b style="font-family:'Liberation Sans',sans-serif;font-weight:700;font-size:13.6px">2017</b> 级中医五五年制 <b style="font-family:'Liberation Sans',sans-serif;font-weight:700;font-size:13.6px">1</b> 班；<i style="font-style:normal;color:#9a9a9a;font-family:'DejaVu Sans',sans-serif;font-size:10px">↵</i></span>
<span style="top:748.32px;font-size:14.4px;line-height:20.16px;color:#111;font-weight:500;font-family:'Liberation Serif','Noto Serif CJK SC',serif;left:336px;"><b style="font-family:'Liberation Sans',sans-serif;font-weight:700;font-size:13.6px">2018</b> 级中医<u>五五</u>年制 <b style="font-family:'Liberation Sans',sans-serif;font-weight:700;font-size:13.6px">1</b> 班；<i style="font-style:normal;color:#9a9a9a;font-family:'DejaVu Sans',sans-serif;font-size:10px">↵</i></span>
<span style="top:772.44px;font-size:10.8px;line-height:15.12px;color:#3a3a3a;left:8px;">第 1 页，共 2 页</span>
<span style="top:772.44px;font-size:10.8px;line-height:15.12px;color:#3a3a3a;left:104.8px;">481 个字</span>
<svg style="left:168.8px;top:774.8px;width:10.8px;height:10px;" viewBox="0 0 5.4 5"><rect x=".3" y=".3" width="4.2" height="4" fill="none" stroke="#888" stroke-width=".5"/><path d="M1.2 1.6H3.6M1.2 2.8H3" stroke="#888" stroke-width=".4"/></svg>
<span style="top:772.44px;font-size:10.8px;line-height:15.12px;color:#3a3a3a;left:194.8px;">中文(中国)</span>
<svg style="left:908.8px;top:774.4px;width:12px;height:10.8px;" viewBox="0 0 6 5.4"><path d="M.3 .6Q1.6 0 3 .8Q4.4 0 5.7 .6V5Q4.4 4.4 3 5.2Q1.6 4.4 .3 5Z" fill="none" stroke="#a5a5a5" stroke-width=".5"/></svg>
<div style="left:935.2px;top:770.8px;width:34px;height:18.8px;background:#c8c8c8;"></div>
<svg style="left:946px;top:774.8px;width:12px;height:10.8px;" viewBox="0 0 6 5.4"><rect x=".3" y=".3" width="5.4" height="4.8" fill="none" stroke="#666" stroke-width=".5"/><path d="M1.4 1.6H4.6M1.4 2.8H4.6M1.4 4H3.4" stroke="#666" stroke-width=".4"/></svg>
<svg style="left:983.2px;top:774.8px;width:12px;height:10.8px;" viewBox="0 0 6 5.4"><rect x=".3" y=".3" width="5.4" height="4.8" fill="none" stroke="#888" stroke-width=".5"/><path d="M1.4 2H4.6M2.4 3.4H4.6" stroke="#888" stroke-width=".4"/></svg>
<div style="left:1012.8px;top:779.6px;width:6px;height:1.2px;background:#666;"></div>
<div style="left:1024px;top:779.6px;width:92px;height:1px;background:#9a9a9a;"></div>
<div style="left:1069.2px;top:774.8px;width:3.2px;height:10.4px;background:#555;"></div>
<div style="left:1121.2px;top:779.6px;width:6px;height:1.2px;background:#666;"></div>
<div style="left:1123.6px;top:777.2px;width:1.2px;height:6px;background:#666;"></div>
<span style="top:772.44px;font-size:10.8px;line-height:15.12px;color:#3a3a3a;left:1140px;">100%</span>
<div style="left:0px;top:790px;width:1176px;height:35.6px;background:linear-gradient(90deg,#e6e6e6 0%,#ece6dc 3%,#efe8d8 6%,#e6e8d8 11%,#e2e8d6 19%,#e6e8d6 34%,#f1e4d4 39%,#f4e6d6 42%,#f8f3ec 56%,#f1f0e4 68%,#d9ecc9 73%,#dcecd0 78%,#efe8d8 85%,#ebe6dc 93%,#e4e4e4 100%);"></div>
<svg style="left:14px;top:799.6px;width:15.6px;height:15.6px;" viewBox="0 0 7.8 7.8"><path d="M0 1L3.4 .5V3.7H0ZM3.9 .45L7.8 0V3.7H3.9ZM0 4.2H3.4V7.3L0 6.8ZM3.9 4.2H7.8V7.8L3.9 7.35Z" fill="#111"/></svg>
<svg style="left:57.2px;top:798.8px;width:16.8px;height:16.8px;" viewBox="0 0 8.4 8.4"><circle cx="5.4" cy="3" r="2.5" fill="none" stroke="#222" stroke-width=".8"/><path d="M3.6 4.8L.6 7.8" stroke="#222" stroke-width=".9"/></svg>
<svg style="left:92.8px;top:802px;width:24px;height:8px;" viewBox="0 0 12 4"><circle cx="1.9" cy="2" r="1.5" fill="#111"/><circle cx="9.9" cy="2" r="1.1" fill="none" stroke="#555" stroke-width=".6"/></svg>
<div style="left:126.8px;top:794px;width:1.8px;height:27.2px;background:#3a3a3a;"></div>
<svg style="left:150px;top:797.6px;width:23.6px;height:20px;" viewBox="0 0 11.8 10"><path d="M0 3.6L5.9 0L11.8 3.6V10H0Z" fill="#1a86d8"/><path d="M0 3.6L5.9 7L11.8 3.6V10H0Z" fill="#2ea3ea"/><path d="M1.6 3.4L5.9 1L10.2 3.4L5.9 6.2Z" fill="#d8eefc"/></svg>
<div style="left:144px;top:822.8px;width:36px;height:2.6px;background:#2b8c94;"></div>
<svg style="left:195.2px;top:796.4px;width:22.8px;height:22.8px;" viewBox="0 0 11.4 11.4"><defs><linearGradient id="eg" x1="0" y1="0" x2="1" y2="1"><stop offset="0" stop-color="#35c1f1"/><stop offset="1" stop-color="#0c59a4"/></linearGradient></defs><circle cx="5.7" cy="5.7" r="5.6" fill="url(#eg)"/><path d="M.15 5.4Q.6 9.8 4.8 11.2Q2.6 9 3.2 6.4Q3.8 4 6 3.6Q3.4 1.6 .15 5.4Z" fill="#3fce6a"/><path d="M4.4 7.2H8.6Q10.6 7 10.4 5Q11.6 7.6 9.6 9.4Q7.4 10.6 5.4 9.6Q4.4 8.6 4.4 7.2Z" fill="#0b4f94"/><path d="M4.6 6.8Q4.6 4.6 6.4 4.4Q8.4 4.6 8.2 6.2Q8 6.8 7.2 6.8Z" fill="#eef6fb"/></svg>
<div style="left:230px;top:790px;width:43.6px;height:35.6px;background:#f3a96c;"></div>
<svg style="left:235.2px;top:795.2px;width:30px;height:22px;" viewBox="0 0 15 11"><ellipse cx="5" cy="4.4" rx="4.4" ry="3.8" fill="#4ec23c"/><ellipse cx="10.6" cy="7" rx="3.6" ry="3.1" fill="#f2f2ee"/><circle cx="3.6" cy="3.4" r=".5" fill="#2a7a20"/><circle cx="6.2" cy="3.4" r=".5" fill="#2a7a20"/></svg>
<svg style="left:285.2px;top:796px;width:24.4px;height:22.8px;" viewBox="0 0 12.2 11.4"><rect width="12.2" height="11.4" rx="2.6" fill="#2f8ae6"/><circle cx="6.1" cy="5.7" r="3.9" fill="none" stroke="#fff" stroke-width="1"/><text x="6.2" y="7.7" font-size="5.6" font-weight="700" text-anchor="middle" fill="#fff" font-family="Liberation Sans,sans-serif">K</text></svg>
<svg style="left:331.6px;top:799.2px;width:20.4px;height:17.2px;" viewBox="0 0 10.2 8.6"><path d="M0 .8H3.8L4.8 1.8H10.2V8.6H0Z" fill="#f2c23c"/><rect x="0" y="3" width="10.2" height="5.6" fill="#f7d466"/><path d="M1.4 5.2H8.8V8.6H6.6V7H3.6V8.6H1.4Z" fill="#3a96de"/></svg>
<div style="left:323.6px;top:822.8px;width:36px;height:2.6px;background:#3c5a5a;"></div>
<svg style="left:373.6px;top:797.6px;width:23.6px;height:20px;" viewBox="0 0 11.8 10"><rect x="3" y="0" width="8.8" height="10" rx=".8" fill="#2e6fd0"/><rect x="3" y="5" width="8.8" height="5" fill="#184a9c"/><rect x="0" y="2" width="6.6" height="6.2" rx=".6" fill="#1b4fa6"/><text x="3.3" y="7" font-size="4.8" font-weight="700" text-anchor="middle" fill="#fff" font-family="Liberation Sans,sans-serif">W</text></svg>
<div style="left:366.4px;top:822.8px;width:40px;height:2.6px;background:#3c5a5a;"></div>
<div style="left:410.8px;top:790px;width:39.6px;height:35.6px;background:#fbfbf8;"></div>
<svg style="left:421.6px;top:797.6px;width:20.4px;height:20px;" viewBox="0 0 10.2 10"><rect width="10.2" height="10" rx="1.8" fill="#166be0"/><path d="M1.6 6.8Q2.6 3 3.8 3Q4.8 3 5.1 5.4Q5.6 3 6.8 3Q8 3 8.8 6.8Q7.6 5.6 6.8 6.8Q6 5.4 5.1 6.8Q4.2 5.4 3.4 6.8Q2.6 5.8 1.6 6.8Z" fill="#fff"/></svg>
<div style="left:410.8px;top:823.2px;width:39.6px;height:2.4px;background:#8ab4e8;"></div>
<svg style="left:899.2px;top:800.8px;width:8px;height:12.8px;" viewBox="0 0 4 6.4"><path d="M2 .4Q3.6 .4 3.6 2.4Q3.6 3.6 2.8 4.2V5.4H1.2V4.2Q.4 3.6 .4 2.4Q.4 .4 2 .4ZM1.4 6H2.6" fill="#fff" stroke="#667" stroke-width=".5"/></svg>
<div style="left:909.2px;top:802.4px;width:24.8px;height:9.2px;background:#2fa84a;border:0.5px solid #1d7a34"></div>
<span style="top:802.16px;font-size:7.2px;line-height:10.08px;color:#fff;font-weight:700;left:921.6px;transform:translateX(-50%);">100%</span>
<svg style="left:945.2px;top:803.2px;width:12px;height:7.2px;" viewBox="0 0 6 3.6"><path d="M.5 3.2L3 .6L5.5 3.2" fill="none" stroke="#333" stroke-width=".7"/></svg>
<svg style="left:973.2px;top:800px;width:14.8px;height:14px;" viewBox="0 0 7.4 7"><path d="M.6 6.6L6.8 .6" stroke="#444" stroke-width=".6"/><path d="M1.8 4.2A3.6 3.6 0 0 1 5.6 5.8M3 2.6A5.4 5.4 0 0 1 6.9 4.6" fill="none" stroke="#444" stroke-width=".6"/><circle cx="3" cy="6" r=".8" fill="#444"/></svg>
<span style="top:798.36px;font-size:13.2px;line-height:18.48px;color:#222;left:1004.8px;transform:translateX(-50%);">中</span>
<span style="top:790.96px;font-size:11.2px;line-height:15.68px;color:#222;left:1048px;transform:translateX(-50%);">14:06 周二</span>
<span style="top:807.36px;font-size:11.2px;line-height:15.68px;color:#222;left:1048px;transform:translateX(-50%);">2021/1/26</span>
<svg style="left:1095.2px;top:798px;width:20px;height:19.2px;" viewBox="0 0 10 9.6"><path d="M4.6 1.2A3.8 3.8 0 1 0 8.4 5Q8.4 8.4 5.4 8.8L4.6 8.8" fill="#fff" stroke="#444" stroke-width=".7"/><circle cx="3.4" cy="4.6" r=".5" fill="#444"/><circle cx="5.8" cy="4.6" r=".5" fill="#444"/><circle cx="8.2" cy="1.6" r="1.1" fill="#e03a3a"/></svg>
<svg style="left:1137.2px;top:800px;width:16px;height:16px;" viewBox="0 0 8 8"><path d="M.4 .4H7.6V5.6H5.6V7.4L3.8 5.6H.4Z" fill="#222"/><path d="M1.6 1.8H6.4M1.6 3H6.4M1.6 4.2H5" stroke="#bbb" stroke-width=".4"/></svg>
<svg style="left:392px;top:208.4px;width:14.8px;height:21.2px;" viewBox="0 0 7.4 10.6"><path d="M2.3 .9Q3 .2 3.7 .9V4.3L4.3 3.9Q5 3.9 5.1 4.6L5.7 4.4Q6.3 4.5 6.4 5.1Q7 5.2 7 5.9V7.6Q7 9 6.2 10.2H2.6Q1.6 8.6 .5 7.2Q.2 6.4 1 6.3Q1.7 6.4 2.3 7.2Z" fill="#fff" stroke="#222" stroke-width=".5" stroke-linejoin="round"/></svg>
</div>
<div id="vline" style="position:absolute;left:588px;top:19px;width:1.1px;height:427px;background:#0c0d0e"></div>
<div id="panel">
 <!-- tile 1 : video -->
 <div class="tile" style="left:3.9px;top:43.2px;width:121px;height:69.5px;border:1.8px solid #24855a;border-image:linear-gradient(180deg,#1a563d 0%,#1e6848 35%,#2b9a5e 100%) 1;background:#2a2420">
  <svg style="left:-1.8px;top:-1.8px;width:121px;height:69px" viewBox="0 0 121 68.4" preserveAspectRatio="none">
   <defs>
    <linearGradient id="wl" x1="0" y1="0" x2="1" y2="0"><stop offset="0" stop-color="#43413d"/><stop offset=".5" stop-color="#67625b"/><stop offset="1" stop-color="#55514b"/></linearGradient>
    <pattern id="bk" width="10.3" height="5.7" patternUnits="userSpaceOnUse" x="19" y="9">
      <rect width="10.3" height="5.7" fill="#6a4428"/>
      <rect x="0.9" y="0.9" width="9" height="4.4" fill="#2f1f15"/>
      <rect x="1.6" y="2.2" width="3.4" height="3.1" fill="#a29d96"/>
      <rect x="5.6" y="2.8" width="3" height="2.5" fill="#76706a"/>
    </pattern>
    <filter id="bl" x="-20%" y="-20%" width="140%" height="140%"><feGaussianBlur stdDeviation=".7"/></filter>
    <filter id="bl2" x="-20%" y="-20%" width="140%" height="140%"><feGaussianBlur stdDeviation="1.6"/></filter>
   </defs>
   <rect width="121" height="68.4" fill="#2a2420"/>
   <rect width="121" height="44" fill="#57554e"/>
   <rect width="121" height="9.4" fill="url(#wl)"/>
   <g filter="url(#bl)">
   <rect x="19" y="9" width="102" height="35" fill="#65401f"/><rect x="19.80" y="10.10" width="9.05" height="4.60" fill="#2e1e14"/><rect x="20.20" y="11.30" width="3.16" height="3.40" fill="#5c5650"/><rect x="24.16" y="12.23" width="3.14" height="2.47" fill="#5a5048"/><rect x="30.05" y="10.10" width="9.05" height="4.60" fill="#2e1e14"/><rect x="30.45" y="12.37" width="2.15" height="2.33" fill="#847e75"/><rect x="33.59" y="11.95" width="2.67" height="2.75" fill="#5c5650"/><rect x="40.30" y="10.10" width="9.05" height="4.60" fill="#2e1e14"/><rect x="40.70" y="12.41" width="3.10" height="2.29" fill="#8a857e"/><rect x="50.55" y="10.10" width="9.05" height="4.60" fill="#2e1e14"/><rect x="50.95" y="11.41" width="2.68" height="3.29" fill="#9a958d"/><rect x="54.41" y="11.77" width="3.12" height="2.93" fill="#847e75"/><rect x="60.80" y="10.10" width="9.05" height="4.60" fill="#2e1e14"/><rect x="61.20" y="11.86" width="2.79" height="2.84" fill="#9a958d"/><rect x="71.05" y="10.10" width="9.05" height="4.60" fill="#2e1e14"/><rect x="71.45" y="12.06" width="2.87" height="2.64" fill="#746e67"/><rect x="81.30" y="10.10" width="9.05" height="4.60" fill="#2e1e14"/><rect x="81.70" y="11.43" width="1.73" height="3.27" fill="#5c5650"/><rect x="91.55" y="10.10" width="9.05" height="4.60" fill="#2e1e14"/><rect x="91.95" y="11.16" width="2.30" height="3.54" fill="#847e75"/><rect x="94.55" y="11.23" width="1.98" height="3.47" fill="#5c5650"/><rect x="101.80" y="10.10" width="9.05" height="4.60" fill="#2e1e14"/><rect x="102.20" y="11.71" width="2.36" height="2.99" fill="#746e67"/><rect x="105.71" y="12.38" width="2.09" height="2.32" fill="#9a958d"/><rect x="112.05" y="10.10" width="9.05" height="4.60" fill="#2e1e14"/><rect x="112.45" y="12.36" width="2.04" height="2.34" fill="#8a857e"/><rect x="115.30" y="11.55" width="2.48" height="3.15" fill="#746e67"/><rect x="19.80" y="15.80" width="9.05" height="4.60" fill="#2e1e14"/><rect x="20.20" y="17.12" width="3.37" height="3.28" fill="#5c5650"/><rect x="24.58" y="17.61" width="1.81" height="2.79" fill="#746e67"/><rect x="30.05" y="15.80" width="9.05" height="4.60" fill="#2e1e14"/><rect x="30.45" y="18.17" width="3.40" height="2.23" fill="#746e67"/><rect x="34.58" y="17.30" width="3.14" height="3.10" fill="#8a857e"/><rect x="40.30" y="15.80" width="9.05" height="4.60" fill="#2e1e14"/><rect x="40.70" y="17.84" width="1.98" height="2.56" fill="#5a5048"/><rect x="43.35" y="18.10" width="2.13" height="2.30" fill="#8a857e"/><rect x="50.55" y="15.80" width="9.05" height="4.60" fill="#2e1e14"/><rect x="50.95" y="17.68" width="1.63" height="2.72" fill="#5a5048"/><rect x="53.38" y="17.52" width="3.33" height="2.88" fill="#5a5048"/><rect x="60.80" y="15.80" width="9.05" height="4.60" fill="#2e1e14"/><rect x="61.20" y="17.98" width="1.93" height="2.42" fill="#746e67"/><rect x="64.33" y="17.93" width="2.05" height="2.47" fill="#847e75"/><rect x="71.05" y="15.80" width="9.05" height="4.60" fill="#2e1e14"/><rect x="71.45" y="17.36" width="3.19" height="3.04" fill="#5c5650"/><rect x="74.99" y="17.48" width="1.80" height="2.92" fill="#9a958d"/><rect x="81.30" y="15.80" width="9.05" height="4.60" fill="#2e1e14"/><rect x="81.70" y="17.95" width="2.13" height="2.45" fill="#847e75"/><rect x="85.20" y="17.53" width="1.83" height="2.87" fill="#847e75"/><rect x="91.55" y="15.80" width="9.05" height="4.60" fill="#2e1e14"/><rect x="91.95" y="18.10" width="2.95" height="2.30" fill="#5c5650"/><rect x="95.69" y="17.95" width="1.71" height="2.45" fill="#9a958d"/><rect x="101.80" y="15.80" width="9.05" height="4.60" fill="#2e1e14"/><rect x="102.20" y="18.01" width="1.77" height="2.39" fill="#5c5650"/><rect x="105.34" y="17.23" width="2.78" height="3.17" fill="#5a5048"/><rect x="112.05" y="15.80" width="9.05" height="4.60" fill="#2e1e14"/><rect x="112.45" y="17.54" width="3.26" height="2.86" fill="#9a958d"/><rect x="19.80" y="21.50" width="9.05" height="4.60" fill="#2e1e14"/><rect x="20.20" y="23.01" width="1.64" height="3.09" fill="#5c5650"/><rect x="30.05" y="21.50" width="9.05" height="4.60" fill="#2e1e14"/><rect x="30.45" y="22.50" width="2.17" height="3.60" fill="#8a857e"/><rect x="33.42" y="23.84" width="2.26" height="2.26" fill="#847e75"/><rect x="40.30" y="21.50" width="9.05" height="4.60" fill="#2e1e14"/><rect x="40.70" y="22.62" width="3.03" height="3.48" fill="#9a958d"/><rect x="44.12" y="23.79" width="2.45" height="2.31" fill="#5c5650"/><rect x="50.55" y="21.50" width="9.05" height="4.60" fill="#2e1e14"/><rect x="50.95" y="23.10" width="3.15" height="3.00" fill="#5a5048"/><rect x="60.80" y="21.50" width="9.05" height="4.60" fill="#2e1e14"/><rect x="61.20" y="23.05" width="2.65" height="3.05" fill="#8a857e"/><rect x="64.25" y="23.54" width="1.81" height="2.56" fill="#5c5650"/><rect x="71.05" y="21.50" width="9.05" height="4.60" fill="#2e1e14"/><rect x="71.45" y="22.73" width="2.39" height="3.37" fill="#8a857e"/><rect x="74.71" y="23.47" width="2.53" height="2.63" fill="#8a857e"/><rect x="81.30" y="21.50" width="9.05" height="4.60" fill="#2e1e14"/><rect x="81.70" y="22.98" width="3.00" height="3.12" fill="#5c5650"/><rect x="85.29" y="23.48" width="1.62" height="2.62" fill="#847e75"/><rect x="91.55" y="21.50" width="9.05" height="4.60" fill="#2e1e14"/><rect x="91.95" y="23.28" width="2.79" height="2.82" fill="#746e67"/><rect x="95.40" y="23.62" width="2.80" height="2.48" fill="#5c5650"/><rect x="101.80" y="21.50" width="9.05" height="4.60" fill="#2e1e14"/><rect x="102.20" y="23.36" width="3.18" height="2.74" fill="#5a5048"/><rect x="106.70" y="23.71" width="1.98" height="2.39" fill="#9a958d"/><rect x="112.05" y="21.50" width="9.05" height="4.60" fill="#2e1e14"/><rect x="112.45" y="22.57" width="2.88" height="3.53" fill="#9a958d"/><rect x="19.80" y="27.20" width="9.05" height="4.60" fill="#2e1e14"/><rect x="20.20" y="29.21" width="2.41" height="2.59" fill="#746e67"/><rect x="30.05" y="27.20" width="9.05" height="4.60" fill="#2e1e14"/><rect x="30.45" y="28.91" width="2.73" height="2.89" fill="#9a958d"/><rect x="34.26" y="28.73" width="3.12" height="3.07" fill="#9a958d"/><rect x="40.30" y="27.20" width="9.05" height="4.60" fill="#2e1e14"/><rect x="40.70" y="29.21" width="2.82" height="2.59" fill="#9a958d"/><rect x="50.55" y="27.20" width="9.05" height="4.60" fill="#2e1e14"/><rect x="50.95" y="29.03" width="2.75" height="2.77" fill="#746e67"/><rect x="60.80" y="27.20" width="9.05" height="4.60" fill="#2e1e14"/><rect x="61.20" y="29.40" width="2.03" height="2.40" fill="#8a857e"/><rect x="64.61" y="29.45" width="1.81" height="2.35" fill="#5a5048"/><rect x="71.05" y="27.20" width="9.05" height="4.60" fill="#2e1e14"/><rect x="71.45" y="28.64" width="3.33" height="3.16" fill="#746e67"/><rect x="75.98" y="28.60" width="2.06" height="3.20" fill="#5c5650"/><rect x="81.30" y="27.20" width="9.05" height="4.60" fill="#2e1e14"/><rect x="81.70" y="29.22" width="1.92" height="2.58" fill="#9a958d"/><rect x="91.55" y="27.20" width="9.05" height="4.60" fill="#2e1e14"/><rect x="91.95" y="28.49" width="2.31" height="3.31" fill="#746e67"/><rect x="94.65" y="28.59" width="3.28" height="3.21" fill="#746e67"/><rect x="101.80" y="27.20" width="9.05" height="4.60" fill="#2e1e14"/><rect x="102.20" y="28.33" width="2.73" height="3.47" fill="#5c5650"/><rect x="105.83" y="28.90" width="2.77" height="2.90" fill="#9a958d"/><rect x="112.05" y="27.20" width="9.05" height="4.60" fill="#2e1e14"/><rect x="112.45" y="28.39" width="1.78" height="3.41" fill="#847e75"/><rect x="115.54" y="29.26" width="1.82" height="2.54" fill="#5c5650"/><rect x="19.80" y="32.90" width="9.05" height="4.60" fill="#2e1e14"/><rect x="20.20" y="34.19" width="2.57" height="3.31" fill="#9a958d"/><rect x="23.35" y="35.28" width="2.89" height="2.22" fill="#5a5048"/><rect x="30.05" y="32.90" width="9.05" height="4.60" fill="#2e1e14"/><rect x="30.45" y="34.71" width="2.22" height="2.79" fill="#9a958d"/><rect x="33.50" y="34.17" width="1.65" height="3.33" fill="#8a857e"/><rect x="35.92" y="34.55" width="1.66" height="2.95" fill="#847e75"/><rect x="40.30" y="32.90" width="9.05" height="4.60" fill="#2e1e14"/><rect x="40.70" y="33.90" width="2.45" height="3.60" fill="#847e75"/><rect x="44.02" y="34.68" width="2.82" height="2.82" fill="#5c5650"/><rect x="50.55" y="32.90" width="9.05" height="4.60" fill="#2e1e14"/><rect x="50.95" y="34.68" width="2.96" height="2.82" fill="#5a5048"/><rect x="60.80" y="32.90" width="9.05" height="4.60" fill="#2e1e14"/><rect x="61.20" y="34.12" width="2.54" height="3.38" fill="#5a5048"/><rect x="64.32" y="33.96" width="2.81" height="3.54" fill="#5a5048"/><rect x="71.05" y="32.90" width="9.05" height="4.60" fill="#2e1e14"/><rect x="71.45" y="34.57" width="3.34" height="2.93" fill="#5a5048"/><rect x="75.64" y="35.14" width="2.34" height="2.36" fill="#8a857e"/><rect x="81.30" y="32.90" width="9.05" height="4.60" fill="#2e1e14"/><rect x="81.70" y="35.24" width="2.57" height="2.26" fill="#5c5650"/><rect x="91.55" y="32.90" width="9.05" height="4.60" fill="#2e1e14"/><rect x="91.95" y="34.33" width="2.48" height="3.17" fill="#8a857e"/><rect x="101.80" y="32.90" width="9.05" height="4.60" fill="#2e1e14"/><rect x="102.20" y="33.96" width="2.34" height="3.54" fill="#5c5650"/><rect x="105.14" y="35.12" width="2.45" height="2.38" fill="#5c5650"/><rect x="112.05" y="32.90" width="9.05" height="4.60" fill="#2e1e14"/><rect x="112.45" y="34.71" width="1.80" height="2.79" fill="#8a857e"/><rect x="115.56" y="34.21" width="1.83" height="3.29" fill="#8a857e"/><rect x="19.80" y="38.60" width="9.05" height="4.60" fill="#2e1e14"/><rect x="20.20" y="40.04" width="2.01" height="3.16" fill="#9a958d"/><rect x="23.31" y="40.30" width="2.04" height="2.90" fill="#5c5650"/><rect x="30.05" y="38.60" width="9.05" height="4.60" fill="#2e1e14"/><rect x="30.45" y="40.13" width="3.13" height="3.07" fill="#847e75"/><rect x="40.30" y="38.60" width="9.05" height="4.60" fill="#2e1e14"/><rect x="40.70" y="40.11" width="1.64" height="3.09" fill="#5a5048"/><rect x="43.32" y="39.79" width="2.57" height="3.41" fill="#5a5048"/><rect x="50.55" y="38.60" width="9.05" height="4.60" fill="#2e1e14"/><rect x="50.95" y="39.96" width="2.02" height="3.24" fill="#9a958d"/><rect x="54.26" y="40.56" width="2.17" height="2.64" fill="#746e67"/><rect x="60.80" y="38.60" width="9.05" height="4.60" fill="#2e1e14"/><rect x="61.20" y="40.81" width="3.20" height="2.39" fill="#746e67"/><rect x="64.84" y="40.46" width="1.76" height="2.74" fill="#5c5650"/><rect x="71.05" y="38.60" width="9.05" height="4.60" fill="#2e1e14"/><rect x="71.45" y="40.01" width="2.58" height="3.19" fill="#746e67"/><rect x="74.77" y="40.98" width="2.83" height="2.22" fill="#746e67"/><rect x="81.30" y="38.60" width="9.05" height="4.60" fill="#2e1e14"/><rect x="81.70" y="40.29" width="1.81" height="2.91" fill="#9a958d"/><rect x="84.36" y="40.74" width="2.83" height="2.46" fill="#8a857e"/><rect x="91.55" y="38.60" width="9.05" height="4.60" fill="#2e1e14"/><rect x="91.95" y="40.23" width="1.67" height="2.97" fill="#5a5048"/><rect x="101.80" y="38.60" width="9.05" height="4.60" fill="#2e1e14"/><rect x="102.20" y="40.74" width="1.86" height="2.46" fill="#746e67"/><rect x="104.55" y="40.60" width="1.88" height="2.60" fill="#847e75"/><rect x="106.84" y="39.67" width="1.71" height="3.53" fill="#5c5650"/><rect x="112.05" y="38.60" width="9.05" height="4.60" fill="#2e1e14"/><rect x="112.45" y="40.35" width="2.19" height="2.85" fill="#5a5048"/>
   <rect x="29.4" y="25" width="18" height="19.4" fill="#6c4527"/>
   <rect x="81.5" y="23" width="9.6" height="19.4" fill="#86674a"/>
   <rect x="101.7" y="26.6" width="19.3" height="17.8" fill="#8c8880"/><path d="M106.6 26.6V44.4M111.4 26.6V44.4M116.2 26.6V44.4" stroke="#7a766e" stroke-width=".5"/>
   <rect x="29" y="41.6" width="19" height="9" fill="#7c5331"/>
   <rect x="60" y="43.6" width="61" height="6.2" fill="#3a2a1e"/>
   <rect x="60" y="43.4" width="61" height="1.2" fill="#6b4c33"/>
   <ellipse cx="35.8" cy="34" rx="3.6" ry="4.6" fill="#46561d"/><ellipse cx="34.4" cy="31.6" rx="1.4" ry="1.8" fill="#7d8f36"/><ellipse cx="37.6" cy="33" rx="1.2" ry="1.6" fill="#8c9c40"/><ellipse cx="36" cy="36.6" rx="1.6" ry="1.4" fill="#2f3a14"/>
   <rect x="0" y="9.4" width="19" height="35" fill="#4b4944"/><ellipse cx="5.5" cy="22.2" rx="1.7" ry="0.6" fill="#2f3626" transform="rotate(-37 5.5 22.2)"/><ellipse cx="8.4" cy="21.8" rx="1.3" ry="1.5" fill="#2f3626" transform="rotate(-48 8.4 21.8)"/><ellipse cx="9.9" cy="11.5" rx="2.1" ry="1.4" fill="#3a4230" transform="rotate(12 9.9 11.5)"/><ellipse cx="11.2" cy="26.1" rx="2.2" ry="1.4" fill="#1d2216" transform="rotate(-25 11.2 26.1)"/><ellipse cx="15.7" cy="33.3" rx="1.9" ry="1.4" fill="#3a4230" transform="rotate(-43 15.7 33.3)"/><ellipse cx="15.5" cy="37.4" rx="1.8" ry="1.4" fill="#2f3626" transform="rotate(-9 15.5 37.4)"/><ellipse cx="5.5" cy="16.5" rx="1.9" ry="0.9" fill="#242a1c" transform="rotate(-59 5.5 16.5)"/><ellipse cx="15.4" cy="40.7" rx="2.1" ry="0.6" fill="#1d2216" transform="rotate(60 15.4 40.7)"/><ellipse cx="16.4" cy="20.0" rx="1.1" ry="1.0" fill="#2f3626" transform="rotate(8 16.4 20.0)"/><ellipse cx="3.6" cy="26.4" rx="1.5" ry="0.8" fill="#242a1c" transform="rotate(37 3.6 26.4)"/><ellipse cx="8.2" cy="28.2" rx="1.0" ry="0.7" fill="#2f3626" transform="rotate(-28 8.2 28.2)"/><ellipse cx="8.9" cy="26.1" rx="1.9" ry="1.2" fill="#242a1c" transform="rotate(-48 8.9 26.1)"/><ellipse cx="6.2" cy="19.3" rx="1.3" ry="1.1" fill="#3a4230" transform="rotate(6 6.2 19.3)"/><ellipse cx="10.7" cy="40.9" rx="1.7" ry="1.4" fill="#242a1c" transform="rotate(10 10.7 40.9)"/><ellipse cx="11.2" cy="33.8" rx="0.9" ry="1.5" fill="#2f3626" transform="rotate(-11 11.2 33.8)"/><ellipse cx="9.3" cy="16.1" rx="1.5" ry="1.2" fill="#242a1c" transform="rotate(-6 9.3 16.1)"/><ellipse cx="16.2" cy="23.6" rx="1.5" ry="1.2" fill="#1d2216" transform="rotate(7 16.2 23.6)"/><ellipse cx="6.6" cy="30.7" rx="1.6" ry="0.9" fill="#1d2216" transform="rotate(-57 6.6 30.7)"/><ellipse cx="2.7" cy="18.4" rx="0.9" ry="0.8" fill="#3a4230" transform="rotate(-54 2.7 18.4)"/><ellipse cx="15.5" cy="33.5" rx="0.9" ry="1.6" fill="#1d2216" transform="rotate(-51 15.5 33.5)"/><ellipse cx="14.1" cy="17.7" rx="1.8" ry="0.9" fill="#2f3626" transform="rotate(-55 14.1 17.7)"/><ellipse cx="10.1" cy="39.1" rx="1.8" ry="1.1" fill="#2f3626" transform="rotate(17 10.1 39.1)"/><ellipse cx="12.7" cy="12.5" rx="1.4" ry="0.7" fill="#242a1c" transform="rotate(-15 12.7 12.5)"/><ellipse cx="10.2" cy="14.7" rx="1.4" ry="1.3" fill="#3a4230" transform="rotate(16 10.2 14.7)"/><ellipse cx="6.3" cy="28.5" rx="1.4" ry="1.4" fill="#2f3626" transform="rotate(-23 6.3 28.5)"/><ellipse cx="13.1" cy="18.2" rx="1.0" ry="1.5" fill="#1d2216" transform="rotate(-25 13.1 18.2)"/><ellipse cx="6.4" cy="31.6" rx="1.6" ry="1.2" fill="#1d2216" transform="rotate(36 6.4 31.6)"/><ellipse cx="6.0" cy="39.6" rx="1.5" ry="1.3" fill="#2f3626" transform="rotate(52 6.0 39.6)"/><ellipse cx="12.4" cy="29.9" rx="0.8" ry="0.9" fill="#242a1c" transform="rotate(19 12.4 29.9)"/><ellipse cx="3.1" cy="17.7" rx="1.2" ry="1.4" fill="#2f3626" transform="rotate(10 3.1 17.7)"/><ellipse cx="5.9" cy="40.4" rx="1.5" ry="1.0" fill="#1d2216" transform="rotate(-17 5.9 40.4)"/><ellipse cx="9.7" cy="15.0" rx="2.0" ry="1.4" fill="#3a4230" transform="rotate(43 9.7 15.0)"/><ellipse cx="14.4" cy="36.1" rx="1.9" ry="1.0" fill="#1d2216" transform="rotate(-11 14.4 36.1)"/><ellipse cx="14.2" cy="22.1" rx="1.7" ry="1.6" fill="#1d2216" transform="rotate(-23 14.2 22.1)"/><ellipse cx="5.0" cy="30.7" rx="1.9" ry="1.0" fill="#2b3223" transform="rotate(41 5.0 30.7)"/><ellipse cx="9.6" cy="38.9" rx="1.2" ry="1.1" fill="#20261a" transform="rotate(-59 9.6 38.9)"/><ellipse cx="8.1" cy="27.6" rx="1.0" ry="1.3" fill="#2b3223" transform="rotate(57 8.1 27.6)"/><ellipse cx="6.0" cy="11.3" rx="2.4" ry="1.3" fill="#343c2b" transform="rotate(18 6.0 11.3)"/><ellipse cx="9.1" cy="38.7" rx="1.7" ry="1.2" fill="#191e13" transform="rotate(-58 9.1 38.7)"/><ellipse cx="4.8" cy="34.5" rx="1.1" ry="1.4" fill="#343c2b" transform="rotate(-40 4.8 34.5)"/><ellipse cx="10.8" cy="20.3" rx="1.6" ry="0.8" fill="#20261a" transform="rotate(0 10.8 20.3)"/><ellipse cx="15.5" cy="17.0" rx="2.1" ry="0.8" fill="#20261a" transform="rotate(-45 15.5 17.0)"/><ellipse cx="10.9" cy="26.8" rx="1.5" ry="0.9" fill="#2b3223" transform="rotate(53 10.9 26.8)"/><ellipse cx="10.5" cy="18.8" rx="2.3" ry="1.1" fill="#191e13" transform="rotate(2 10.5 18.8)"/><ellipse cx="8.3" cy="10.8" rx="1.0" ry="1.2" fill="#343c2b" transform="rotate(-60 8.3 10.8)"/><ellipse cx="9.9" cy="26.5" rx="2.0" ry="0.8" fill="#191e13" transform="rotate(11 9.9 26.5)"/><ellipse cx="17.2" cy="13.4" rx="1.9" ry="1.2" fill="#191e13" transform="rotate(-16 17.2 13.4)"/><ellipse cx="13.9" cy="37.9" rx="1.3" ry="0.8" fill="#2b3223" transform="rotate(39 13.9 37.9)"/><ellipse cx="8.9" cy="14.8" rx="1.0" ry="1.1" fill="#2b3223" transform="rotate(-8 8.9 14.8)"/><ellipse cx="16.3" cy="14.9" rx="2.0" ry="0.6" fill="#191e13" transform="rotate(2 16.3 14.9)"/><ellipse cx="10.1" cy="30.0" rx="2.3" ry="0.8" fill="#20261a" transform="rotate(-4 10.1 30.0)"/><ellipse cx="14.6" cy="33.2" rx="1.6" ry="1.4" fill="#20261a" transform="rotate(49 14.6 33.2)"/><ellipse cx="6.4" cy="18.7" rx="1.5" ry="0.8" fill="#20261a" transform="rotate(51 6.4 18.7)"/><ellipse cx="7.6" cy="37.0" rx="2.4" ry="1.3" fill="#343c2b" transform="rotate(-54 7.6 37.0)"/><ellipse cx="6.3" cy="38.8" rx="1.7" ry="1.3" fill="#20261a" transform="rotate(-33 6.3 38.8)"/><ellipse cx="16.0" cy="21.0" rx="1.1" ry="0.9" fill="#343c2b" transform="rotate(2 16.0 21.0)"/><ellipse cx="11.2" cy="35.5" rx="1.4" ry="1.1" fill="#191e13" transform="rotate(-43 11.2 35.5)"/><ellipse cx="14.0" cy="10.3" rx="1.9" ry="1.5" fill="#20261a" transform="rotate(-27 14.0 10.3)"/><ellipse cx="11.4" cy="29.3" rx="2.2" ry="1.1" fill="#191e13" transform="rotate(27 11.4 29.3)"/><ellipse cx="8.6" cy="38.8" rx="2.3" ry="0.7" fill="#20261a" transform="rotate(-10 8.6 38.8)"/><ellipse cx="3.9" cy="10.8" rx="1.6" ry="0.7" fill="#20261a" transform="rotate(23 3.9 10.8)"/><ellipse cx="6.7" cy="19.1" rx="2.3" ry="1.0" fill="#2b3223" transform="rotate(19 6.7 19.1)"/><ellipse cx="5.0" cy="15.5" rx="1.5" ry="1.2" fill="#20261a" transform="rotate(17 5.0 15.5)"/><ellipse cx="13.2" cy="36.2" rx="2.1" ry="1.3" fill="#20261a" transform="rotate(-11 13.2 36.2)"/><ellipse cx="9.5" cy="11.9" rx="2.0" ry="0.8" fill="#2b3223" transform="rotate(-28 9.5 11.9)"/><ellipse cx="17.0" cy="28.2" rx="2.0" ry="0.8" fill="#2b3223" transform="rotate(-21 17.0 28.2)"/><ellipse cx="13.4" cy="39.7" rx="2.1" ry="1.3" fill="#343c2b" transform="rotate(13 13.4 39.7)"/><ellipse cx="4.0" cy="28.0" rx="1.7" ry="1.3" fill="#191e13" transform="rotate(-23 4.0 28.0)"/><ellipse cx="13.0" cy="25.8" rx="1.7" ry="0.7" fill="#191e13" transform="rotate(-35 13.0 25.8)"/><ellipse cx="7.8" cy="19.5" rx="2.4" ry="0.7" fill="#20261a" transform="rotate(23 7.8 19.5)"/><ellipse cx="3.6" cy="34.4" rx="2.0" ry="1.0" fill="#20261a" transform="rotate(27 3.6 34.4)"/><ellipse cx="12.2" cy="23.3" rx="1.7" ry="1.0" fill="#343c2b" transform="rotate(-51 12.2 23.3)"/><ellipse cx="5.9" cy="11.5" rx="1.6" ry="0.8" fill="#343c2b" transform="rotate(32 5.9 11.5)"/><ellipse cx="8.9" cy="33.9" rx="1.5" ry="0.9" fill="#2b3223" transform="rotate(20 8.9 33.9)"/><rect x="3" y="36" width="9" height="8" fill="#2a2622"/>
   <rect x="0" y="40" width="29" height="13" fill="#2c241e"/><rect x="3" y="41" width="10" height="6" fill="#4a3222"/>
   <ellipse cx="97" cy="56" rx="7" ry="5" fill="#7a5a3a" filter="url(#bl2)"/>
   <rect x="80" y="48" width="11.4" height="12" rx="2" fill="#5a5650"/>
   <rect x="104.5" y="49.6" width="12.6" height="12.6" rx="2" fill="#4e4a46"/>
   <circle cx="83" cy="42.6" r="1.6" fill="#d6d6cc"/>
   </g>
   <!-- person -->
   <g filter="url(#bl)">
   <path d="M50 68.4 L52 58 Q62 50 71 52.4 Q86 57 93 68.4 Z" fill="#bcb8b3"/>
   <path d="M45 33 Q43.6 13 61.6 12.8 Q78.6 13.4 77.6 30 Q77.6 36 75 39 L72 28 Q62 19 50 27 L47.6 36 Z" fill="#2c2528"/>
   <path d="M47 30 Q48 20.4 60.6 20 Q73.4 20.4 74.6 31 L74 42 Q71.4 54 61.6 56.6 Q51.4 55 48 43 Z" fill="#98796a"/>
   <path d="M50 47 Q53 55.6 61.6 56.6 Q67.6 55 70.6 49 L69.4 60 Q62 64 52.6 60 Z" fill="#85644f"/>
   <ellipse cx="61" cy="30" rx="9" ry="6.4" fill="#a68676"/>
   <path d="M46.6 36.8 H75.4" stroke="#33262f" stroke-width=".9"/>
   <rect x="47.6" y="36.2" width="11.4" height="5.4" rx="2" fill="#4a4060" fill-opacity=".28" stroke="#3a2c36" stroke-width=".7"/>
   <rect x="62.2" y="36.2" width="11.4" height="5.4" rx="2" fill="#4a4060" fill-opacity=".28" stroke="#3a2c36" stroke-width=".7"/>
   <path d="M57.6 50.4 Q61 51.6 64.6 50.4" stroke="#7a4a44" stroke-width=".9" fill="none"/>
   </g>
  </svg>
  <div style="left:0.2px;top:51.6px;width:15.4px;height:14.6px;background:#1f6fe0"></div>
  <svg style="left:2.6px;top:53.4px;width:10.8px;height:11.8px" viewBox="0 0 11 12"><circle cx="5.5" cy="3.4" r="2.6" fill="#fff"/><path d="M0.5 11 Q0.5 6.6 5.5 6.6 Q10.5 6.6 10.5 11 Z" fill="#fff"/></svg>
  <div class="lbl" style="left:15.6px;top:51.6px;width:47.4px;height:14.6px;background:rgba(22,19,19,.9)">
   <svg style="left:4.2px;top:1.8px;width:11px;height:12px" viewBox="0 0 11 12"><defs><linearGradient id="mg" x1="0" y1="0" x2="0" y2="1"><stop offset="0" stop-color="#fff"/><stop offset=".35" stop-color="#d8f4e4"/><stop offset="1" stop-color="#35c46e"/></linearGradient></defs><rect x="2.9" y="0.5" width="5.2" height="7.6" rx="2.6" fill="url(#mg)" stroke="#fff" stroke-width=".5"/><path d="M0.8 5.2 Q0.8 9.8 5.5 9.8 Q10.2 9.8 10.2 5.2" fill="none" stroke="#fff" stroke-width="1.1"/><path d="M5.5 9.8V11.4" stroke="#fff" stroke-width="1.2"/></svg>
   <span style="left:18.9px;top:1.1px;font-size:8.5px;line-height:14.6px">费宇彤</span>
  </div>
 </div>
 <!-- tile 2 -->
 <div class="tile" style="top:118.4px">
  <svg style="left:39.3px;top:8.7px;width:39px;height:39px" viewBox="0 0 39 39">
   <defs><clipPath id="c2"><circle cx="19.5" cy="19.5" r="19.2"/></clipPath></defs>
   <circle cx="19.5" cy="19.5" r="19.2" fill="#fefefe"/>
   <g clip-path="url(#c2)" filter="url(#bl)">
    <path d="M1 26 Q5 22 9 23.6 L15 25 L19 30 L21 34 L12 36 L3 34 Z" fill="#f1efee"/>
    <path d="M2 25 L6 23 L9 30 L5 34 Z" fill="#e2e0e2"/>
    <path d="M9 33.4 Q17 30.6 26.4 34.4 L25 39 L8 39 Z" fill="#4a4a53"/>
    <path d="M6.6 16 Q7 13 11 13.4 L16 15 Q17 20 15.6 23 Q13 25.4 10 24.4 Q6.4 22 6.6 16Z" fill="#f5dcc9"/>
    <path d="M1.6 18 Q0.6 6 10 5 Q18.6 4.6 18 14 Q17.6 17.6 16.2 19.6 Q16.2 14.6 13.4 13.4 Q9.4 14.4 7.6 19.4 Q6.8 22.4 4.6 22.6 Q2 21.4 1.6 18Z" fill="#7f3e13"/>
    <path d="M5 10 Q8 6.4 13 7.4" stroke="#a35a22" stroke-width="1.2" fill="none"/>
    <ellipse cx="13.6" cy="18.6" rx=".7" ry="1" fill="#5a3a2a"/>
    <path d="M13.4 28.4 L22 26.6 L23.4 29.6 L15 31.8Z" fill="#56776a"/>
    <path d="M13.4 28.4 L22 26.6 L22.4 27.6 L13.8 29.4Z" fill="#8aa69a"/>
    <path d="M9.6 25 L12.4 28 L10.6 28.6Z" fill="#b9c6dc"/>
    <rect x="7.6" y="31" width="2.2" height="1.4" fill="#222" transform="rotate(-20 8.6 31.6)"/>
   </g>
  </svg>
  <div class="lbl" style="left:0;top:51.4px;width:23.4px"><span style="left:4px">王冬</span></div>
 </div>
 <!-- tile 3 -->
 <div class="tile" style="top:193.9px">
  <svg style="left:39.3px;top:8.7px;width:39px;height:39px" viewBox="0 0 39 39">
   <defs><clipPath id="c3"><circle cx="19.5" cy="19.5" r="19.2"/></clipPath></defs>
   <circle cx="19.5" cy="19.5" r="19.2" fill="#e6d6ae"/>
   <g clip-path="url(#c3)" filter="url(#bl)">
    <rect x="22" y="0" width="18" height="39" fill="#efe6cc"/>
    <path d="M5 14 Q5 3 17 1.2 Q27 1 29.6 10 Q31.8 14 31 20.6 Q28.6 22.4 26.4 20 L24.4 13 Q19 7.4 12 9.4 Q8 12 8 18 L8.8 25 Q5.6 22 5 14Z" fill="#1b1216"/>
    <path d="M8 15.6 Q9.6 8.8 17 9 Q23.6 9.6 24.8 16 Q25.6 23 21 29.4 Q18 31.6 15.4 29.6 Q9 24 8 15.6Z" fill="#f0eae3"/>
    <path d="M19.6 21 Q22 23 21.4 27 Q20 29 18.6 29Z" fill="#ebdcd2"/>
    <ellipse cx="16.6" cy="3.8" rx="2.4" ry="1.5" fill="#8c9dcb"/>
    <path d="M20.6 5 Q24 3.6 26.6 7.4 Q27.6 10 26.6 10.4 Q22.6 9.6 20.6 5Z" fill="#6f87c7"/>
    <ellipse cx="31" cy="22" rx="2.4" ry="2" fill="#a9c0d0"/>
    <path d="M22 26.6 Q24 23 29 23.6 Q35.6 23.4 35.8 26.4 Q34 30 28 29.8 Q23 30 22 26.6Z" fill="#d61a18"/>
    <path d="M25 26 Q28 24.6 31 26" stroke="#f0534a" stroke-width=".8" fill="none"/>
    <ellipse cx="16.6" cy="25.8" rx="1.3" ry=".9" fill="#c8201c"/>
    <path d="M10 34 Q13.6 30.4 16.4 32 L18 39 L9 39Z" fill="#8aa0c2"/>
    <path d="M16.4 32 Q20 30.4 23 32.6 L22 39 L17.6 39Z" fill="#e9ddd2"/>
    <path d="M23 32.6 Q27 31.6 30 33 L27 39 L22 39Z" fill="#d6dbe0"/>
    <path d="M10.8 17.6 Q12.6 16.2 14.8 17.2" stroke="#3a2a2a" stroke-width=".8" fill="none"/>
    <path d="M17.6 16.4 Q19.6 15.2 21.8 16.4" stroke="#3a2a2a" stroke-width=".8" fill="none"/>
    <path d="M10.4 15.4 Q12.4 14 14.6 15M17.4 14 Q19.6 13 22 14.2" stroke="#6a5a58" stroke-width=".5" fill="none"/>
   </g>
  </svg>
  <div style="left:0.3px;top:51.4px;width:15.3px;height:15.3px;background:#f08018"></div>
  <svg style="left:2.6px;top:53.2px;width:11px;height:12px" viewBox="0 0 11 12"><circle cx="5.5" cy="3.4" r="2.6" fill="#fff"/><path d="M0.5 11 Q0.5 6.6 5.5 6.6 Q10.5 6.6 10.5 11 Z" fill="#fff"/></svg>
  <div class="lbl" style="left:15.6px;top:51.4px;width:39.6px">
   <svg style="left:4px;top:2px;width:11px;height:12px" viewBox="0 0 11 12"><rect x="3.2" y="0.6" width="4.6" height="7.2" rx="2.3" fill="#f4f4f4"/><path d="M1 5.2 Q1 9.6 5.5 9.6 Q10 9.6 10 5.2" fill="none" stroke="#f4f4f4" stroke-width="1.1"/><path d="M5.5 9.6V11.2M3.6 11.3H7.4" stroke="#f4f4f4" stroke-width="1.1"/><path d="M0.6 11 L10.4 0.8" stroke="#e02525" stroke-width="1.1"/></svg>
   <span style="left:19.3px">王冬</span>
  </div>
 </div>
 <!-- tile 4 -->
 <div class="tile" style="top:269.4px">
  <svg style="left:39.3px;top:8.8px;width:39px;height:39px" viewBox="0 0 39 39">
   <defs><clipPath id="c4"><circle cx="19.5" cy="19.5" r="19"/></clipPath></defs>
   <circle cx="19.5" cy="19.5" r="19" fill="#4f8f2c"/>
   <g clip-path="url(#c4)" filter="url(#bl)">
    <ellipse cx="9.2" cy="2.8" rx="2.0" ry="1.2" fill="#6fae3c"/><ellipse cx="0.8" cy="14.8" rx="1.8" ry="2.4" fill="#6fae3c"/><ellipse cx="8.7" cy="14.5" rx="1.8" ry="1.2" fill="#6fae3c"/><ellipse cx="10.2" cy="25.5" rx="1.3" ry="1.9" fill="#86c04c"/><ellipse cx="31.2" cy="5.2" rx="1.8" ry="1.9" fill="#274f16"/><ellipse cx="37.5" cy="22.9" rx="1.9" ry="2.2" fill="#86c04c"/><ellipse cx="26.2" cy="13.7" rx="1.6" ry="1.7" fill="#6fae3c"/><ellipse cx="36.8" cy="22.1" rx="3.1" ry="2.2" fill="#6fae3c"/><ellipse cx="35.4" cy="15.5" rx="3.0" ry="2.2" fill="#5a9a30"/><ellipse cx="7.6" cy="11.4" rx="1.8" ry="1.6" fill="#2f6a1c"/><ellipse cx="11.9" cy="21.9" rx="1.3" ry="1.1" fill="#274f16"/><ellipse cx="38.9" cy="14.0" rx="2.5" ry="2.0" fill="#2f6a1c"/><ellipse cx="38.9" cy="5.3" rx="2.0" ry="1.3" fill="#274f16"/><ellipse cx="17.2" cy="5.0" rx="2.1" ry="1.8" fill="#274f16"/><ellipse cx="21.8" cy="24.4" rx="1.4" ry="1.1" fill="#2f6a1c"/><ellipse cx="10.8" cy="15.7" rx="2.9" ry="1.2" fill="#2f6a1c"/><ellipse cx="11.3" cy="0.7" rx="1.9" ry="1.1" fill="#86c04c"/><ellipse cx="28.7" cy="25.9" rx="1.2" ry="1.4" fill="#2f6a1c"/><ellipse cx="30.2" cy="11.1" rx="3.1" ry="1.9" fill="#9acb5a"/><ellipse cx="3.0" cy="16.7" rx="3.0" ry="1.4" fill="#86c04c"/><ellipse cx="14.9" cy="26.0" rx="1.9" ry="1.0" fill="#6fae3c"/><ellipse cx="17.7" cy="9.9" rx="2.8" ry="2.4" fill="#5a9a30"/><ellipse cx="3.8" cy="26.5" rx="2.0" ry="1.3" fill="#6fae3c"/><ellipse cx="2.4" cy="19.9" rx="2.4" ry="2.4" fill="#5a9a30"/><ellipse cx="1.6" cy="13.2" rx="1.7" ry="2.4" fill="#6fae3c"/><ellipse cx="32.6" cy="7.9" rx="3.2" ry="1.9" fill="#2f6a1c"/><ellipse cx="18.6" cy="6.5" rx="2.0" ry="1.1" fill="#3f7f24"/><ellipse cx="17.3" cy="17.5" rx="2.1" ry="1.3" fill="#2f6a1c"/><ellipse cx="1.2" cy="6.9" rx="1.7" ry="1.3" fill="#2f6a1c"/><ellipse cx="16.3" cy="7.1" rx="1.9" ry="2.2" fill="#86c04c"/><ellipse cx="22.0" cy="26.7" rx="2.0" ry="2.3" fill="#274f16"/><ellipse cx="34.0" cy="19.4" rx="1.3" ry="1.5" fill="#3f7f24"/><ellipse cx="8.2" cy="23.6" rx="3.0" ry="2.3" fill="#86c04c"/><ellipse cx="11.6" cy="12.7" rx="3.0" ry="1.4" fill="#3f7f24"/><ellipse cx="20.6" cy="17.7" rx="2.6" ry="1.4" fill="#3f7f24"/><ellipse cx="37.3" cy="2.0" rx="3.1" ry="2.3" fill="#274f16"/><ellipse cx="7.5" cy="10.7" rx="2.4" ry="2.1" fill="#86c04c"/><ellipse cx="26.0" cy="1.6" rx="1.5" ry="1.9" fill="#5a9a30"/><ellipse cx="18.4" cy="10.9" rx="2.0" ry="2.1" fill="#2f6a1c"/><ellipse cx="36.0" cy="0.4" rx="3.0" ry="1.2" fill="#9acb5a"/><ellipse cx="30.0" cy="10.3" rx="1.6" ry="1.1" fill="#2f6a1c"/><ellipse cx="6.3" cy="16.4" rx="2.8" ry="1.8" fill="#9acb5a"/><ellipse cx="18.4" cy="14.2" rx="1.3" ry="1.0" fill="#5a9a30"/><ellipse cx="4.4" cy="15.1" rx="1.7" ry="2.1" fill="#6fae3c"/><ellipse cx="14.1" cy="20.7" rx="2.2" ry="1.0" fill="#9acb5a"/><ellipse cx="13.5" cy="2.0" rx="3.1" ry="1.6" fill="#2f6a1c"/>
    <ellipse cx="31" cy="24" rx="8" ry="7" fill="#2c6219"/>
    <ellipse cx="27" cy="30" rx="5" ry="3" fill="#356f1f"/>
    <rect x="0" y="28" width="39" height="11" fill="#a4ba58"/>
    <ellipse cx="9" cy="31" rx="10" ry="3.6" fill="#c2cc78"/>
    <ellipse cx="24" cy="36" rx="10" ry="3" fill="#8fae48"/>
    <path d="M0 17 Q6 13.4 12 16 L13.4 25 Q6 29 0 27Z" fill="#c3d0c6"/>
    <ellipse cx="5" cy="21" rx="4.6" ry="3.4" fill="#97ada4"/>
    <path d="M2 25 Q7 27 12 25" stroke="#e9efe9" stroke-width="1.2" fill="none"/>
    <path d="M14.6 17.4 L16.4 13.6 L18.6 16 Q20.4 15.4 22.4 16 L24.6 13.8 L26 17.6 Q27.4 21.4 25.4 25 Q23.6 28.4 20.4 28.4 Q16.4 28 15 24 Q13.8 20.6 14.6 17.4Z" fill="#ecd29c"/>
    <ellipse cx="19.6" cy="30" rx="6" ry="3" fill="#dcc38a"/>
    <ellipse cx="20.4" cy="24" rx="2.6" ry="2.2" fill="#f7ecd2"/>
    <circle cx="18" cy="20.6" r=".8" fill="#4a3a20"/><circle cx="22.8" cy="20.6" r=".8" fill="#4a3a20"/>
    <path d="M17.6 11 Q20 9.6 21.6 12 Q23 14.6 20.6 16 Q18 16.6 16.8 14.6 Q16.2 12.4 17.6 11Z" fill="#f1e11e"/>
    <path d="M28.4 11.6 Q31 10 32.6 12.4 Q33.6 15 31.4 16.4 Q28.6 17 27.6 14.8 Q27 12.8 28.4 11.6Z" fill="#efde22"/>
    <path d="M34.4 17.6 Q36.6 16.8 37.8 18.8 Q38.4 21 36.6 22 Q34.4 22.4 33.6 20.6 Q33.2 18.6 34.4 17.6Z" fill="#e8d624"/>
    <path d="M23.8 21.6 Q26.4 20.4 27.8 22.8 Q28.6 25.4 26.4 26.6 Q23.8 27 22.8 24.8 Q22.4 22.8 23.8 21.6Z" fill="#f3e31c"/>
   </g>
  </svg>
  <div class="lbl" style="left:0;top:51.4px;width:55.6px">
   <svg style="left:4px;top:2px;width:11px;height:12px" viewBox="0 0 11 12"><rect x="3.2" y="0.6" width="4.6" height="7.2" rx="2.3" fill="#f4f4f4"/><path d="M1 5.2 Q1 9.6 5.5 9.6 Q10 9.6 10 5.2" fill="none" stroke="#f4f4f4" stroke-width="1.1"/><path d="M5.5 9.6V11.2M3.6 11.3H7.4" stroke="#f4f4f4" stroke-width="1.1"/><path d="M0.6 11 L10.4 0.8" stroke="#e02525" stroke-width="1.1"/></svg>
   <span style="left:19.3px">22雷晓莹</span>
  </div>
 </div>
 <!-- tile 5 -->
 <div class="tile" style="top:344.9px;background:linear-gradient(180deg,#1f2022,#121314);border-color:#37383b #2c2d2f #232425 #2c2d2f">
  <svg style="left:39.8px;top:9.2px;width:37.5px;height:37.5px" viewBox="0 0 39 39">
   <defs><clipPath id="c5"><circle cx="19.5" cy="19.5" r="19"/></clipPath></defs>
   <circle cx="19.5" cy="19.5" r="19" fill="#7d5430"/>
   <g clip-path="url(#c5)" filter="url(#bl)">
    <rect x="0" y="0" width="39" height="39" fill="#74502e"/>
    <ellipse cx="38.5" cy="8.6" rx="1.5" ry="1.0" fill="#7a5a20"/><ellipse cx="18.3" cy="3.0" rx="1.7" ry="1.8" fill="#b8702a"/><ellipse cx="32.8" cy="4.3" rx="1.9" ry="1.6" fill="#a8802c"/><ellipse cx="32.6" cy="1.1" rx="1.5" ry="1.5" fill="#7a5a20"/><ellipse cx="18.6" cy="1.6" rx="2.1" ry="1.1" fill="#5a4018"/><ellipse cx="18.1" cy="6.7" rx="1.1" ry="1.0" fill="#7a5a20"/><ellipse cx="1.1" cy="5.3" rx="1.7" ry="1.5" fill="#b8702a"/><ellipse cx="32.2" cy="8.8" rx="1.9" ry="1.2" fill="#b8702a"/><ellipse cx="21.4" cy="0.2" rx="2.1" ry="1.5" fill="#a8802c"/><ellipse cx="20.5" cy="8.4" rx="1.6" ry="1.7" fill="#7a5a20"/><ellipse cx="1.1" cy="1.9" rx="1.7" ry="1.6" fill="#c09030"/><ellipse cx="10.1" cy="3.8" rx="1.2" ry="1.7" fill="#c09030"/><ellipse cx="35.0" cy="6.0" rx="2.1" ry="1.3" fill="#b8702a"/><ellipse cx="5.1" cy="1.4" rx="1.7" ry="1.7" fill="#7a5a20"/><ellipse cx="23.7" cy="7.0" rx="1.2" ry="0.9" fill="#b8702a"/><ellipse cx="28.3" cy="5.0" rx="1.5" ry="1.3" fill="#b8702a"/><ellipse cx="18.8" cy="7.0" rx="2.2" ry="0.9" fill="#7a5a20"/><ellipse cx="10.8" cy="7.0" rx="1.7" ry="1.4" fill="#a8802c"/><ellipse cx="17.3" cy="5.5" rx="1.7" ry="1.3" fill="#c09030"/><ellipse cx="17.6" cy="4.8" rx="1.7" ry="1.7" fill="#b8702a"/><ellipse cx="34.2" cy="8.5" rx="1.4" ry="1.4" fill="#7a5a20"/><ellipse cx="32.8" cy="1.2" rx="1.2" ry="1.2" fill="#a8802c"/><ellipse cx="26.2" cy="3.9" rx="1.3" ry="1.1" fill="#a8802c"/><ellipse cx="35.0" cy="1.4" rx="2.0" ry="1.5" fill="#7a5a20"/><ellipse cx="9.9" cy="1.2" rx="1.7" ry="1.5" fill="#a8802c"/><ellipse cx="15.5" cy="4.4" rx="2.4" ry="1.6" fill="#7a5a20"/>
    <ellipse cx="5" cy="17" rx="6" ry="8" fill="#9a742c"/>
    <ellipse cx="3" cy="20" rx="3" ry="5" fill="#b8902e"/>
    <ellipse cx="17.6" cy="16" rx="6" ry="5.6" fill="#b2501f"/>
    <ellipse cx="15" cy="19" rx="3" ry="3" fill="#c8702a"/>
    <rect x="0" y="23" width="39" height="17" fill="#7a604a"/>
    <ellipse cx="11.0" cy="25.4" rx="1.6" ry="0.5" fill="#8a6a40"/><ellipse cx="3.2" cy="32.3" rx="1.9" ry="0.6" fill="#9a7a4a"/><ellipse cx="14.7" cy="24.1" rx="0.9" ry="0.8" fill="#8a6a40"/><ellipse cx="4.2" cy="26.6" rx="1.6" ry="1.1" fill="#8a6a40"/><ellipse cx="19.9" cy="23.8" rx="1.1" ry="0.8" fill="#6a4a30"/><ellipse cx="9.8" cy="25.3" rx="0.9" ry="0.7" fill="#b08a50"/><ellipse cx="6.1" cy="32.3" rx="1.6" ry="0.7" fill="#8a6a40"/><ellipse cx="24.2" cy="32.0" rx="1.5" ry="0.8" fill="#8a6a40"/><ellipse cx="14.5" cy="28.0" rx="1.5" ry="0.8" fill="#a8884e"/><ellipse cx="8.4" cy="25.9" rx="1.7" ry="0.5" fill="#a8884e"/><ellipse cx="17.9" cy="37.0" rx="1.7" ry="0.7" fill="#9a7a4a"/><ellipse cx="4.0" cy="29.7" rx="1.7" ry="0.6" fill="#5a3a28"/><ellipse cx="14.3" cy="38.4" rx="0.9" ry="0.8" fill="#a8884e"/><ellipse cx="11.6" cy="28.6" rx="1.4" ry="1.0" fill="#9a7a4a"/><ellipse cx="28.6" cy="38.1" rx="1.4" ry="0.9" fill="#9a7a4a"/><ellipse cx="24.9" cy="28.0" rx="1.5" ry="0.9" fill="#5a3a28"/><ellipse cx="9.7" cy="29.2" rx="1.6" ry="0.5" fill="#5a3a28"/><ellipse cx="12.1" cy="32.8" rx="1.4" ry="0.6" fill="#a8884e"/><ellipse cx="4.4" cy="27.0" rx="1.3" ry="1.0" fill="#9a7a4a"/><ellipse cx="5.7" cy="29.4" rx="1.1" ry="0.6" fill="#5a3a28"/><ellipse cx="29.4" cy="27.5" rx="1.3" ry="0.7" fill="#5a3a28"/><ellipse cx="32.6" cy="25.4" rx="1.0" ry="0.6" fill="#6a4a30"/><ellipse cx="0.4" cy="36.3" rx="1.0" ry="0.7" fill="#6a4a30"/><ellipse cx="14.2" cy="28.9" rx="1.5" ry="1.1" fill="#b08a50"/><ellipse cx="29.2" cy="38.2" rx="1.6" ry="0.9" fill="#5a3a28"/><ellipse cx="30.6" cy="35.5" rx="1.8" ry="1.0" fill="#5a3a28"/><ellipse cx="13.5" cy="29.3" rx="1.4" ry="0.7" fill="#6a4a30"/><ellipse cx="2.3" cy="26.3" rx="1.0" ry="0.7" fill="#9a7a4a"/><ellipse cx="3.5" cy="32.1" rx="1.4" ry="1.1" fill="#8a6a40"/><ellipse cx="0.9" cy="37.0" rx="1.5" ry="0.6" fill="#a8884e"/><ellipse cx="32.5" cy="32.6" rx="1.4" ry="0.6" fill="#5a3a28"/><ellipse cx="33.8" cy="30.5" rx="1.4" ry="0.6" fill="#9a7a4a"/><ellipse cx="25.5" cy="34.8" rx="1.4" ry="0.9" fill="#8a6a40"/><ellipse cx="0.8" cy="38.2" rx="1.4" ry="0.6" fill="#8a6a40"/><ellipse cx="31.1" cy="35.1" rx="1.2" ry="0.9" fill="#9a7a4a"/><ellipse cx="23.7" cy="27.2" rx="1.2" ry="0.6" fill="#6a4a30"/><ellipse cx="18.1" cy="35.5" rx="1.2" ry="0.6" fill="#6a4a30"/><ellipse cx="27.4" cy="36.1" rx="1.7" ry="0.6" fill="#8a6a40"/><ellipse cx="16.8" cy="34.7" rx="2.0" ry="1.0" fill="#5a3a28"/><ellipse cx="8.8" cy="34.1" rx="1.9" ry="0.8" fill="#b08a50"/>
    <path d="M0 26 L16 22 L20 23 L8 30 L0 31Z" fill="#8b735a"/>
    <path d="M6 5.4 H37 V8 H6Z" fill="#861a18"/>
    <path d="M6 5.4 H12.6 V7.6 H8.6 V12 H11.4 V10.2 H10.2 V9 H13 V13.6 H6Z" fill="#7c1717"/>
    <rect x="7.2" y="13" width="1.5" height="12" fill="#3f1812"/>
    <rect x="11.6" y="14" width="1" height="9" fill="#4a2016"/>
    <path d="M33 6 H39 V34 L33 31Z" fill="#7a1917"/>
    <path d="M23 9.6 L33 8 L33 30.6 L23 25.6Z" fill="#bdb4ab"/>
    <path d="M26.4 9 V27.4 M29.8 8.6 V29" stroke="#5e4e46" stroke-width="1"/>
    <path d="M19.4 16 L23 15 L23 25.6 L19.4 23.6Z" fill="#8c2a1c"/>
   </g>
   <circle cx="19.5" cy="19.5" r="19" fill="rgba(0,0,0,.25)"/>
  </svg>
  <div class="lbl" style="left:0;top:51.4px;width:85.6px;background:#0b0b0b"><span style="left:4.5px;color:#a4a4a4;font-weight:400">沈雨嫣20180121021</span></div>
 </div>
</div>
<div id="tog" style="position:absolute;left:576px;top:232.5px;width:12px;height:30px;background:#595959;border-radius:3px 0 0 3px"><svg style="position:absolute;left:2.5px;top:9px;width:7px;height:12px" viewBox="0 0 7 12"><path d="M1.5 2 L5.2 6 L1.5 10" fill="none" stroke="#c4c4c4" stroke-width="1.1"/></svg></div>

</body></html>
